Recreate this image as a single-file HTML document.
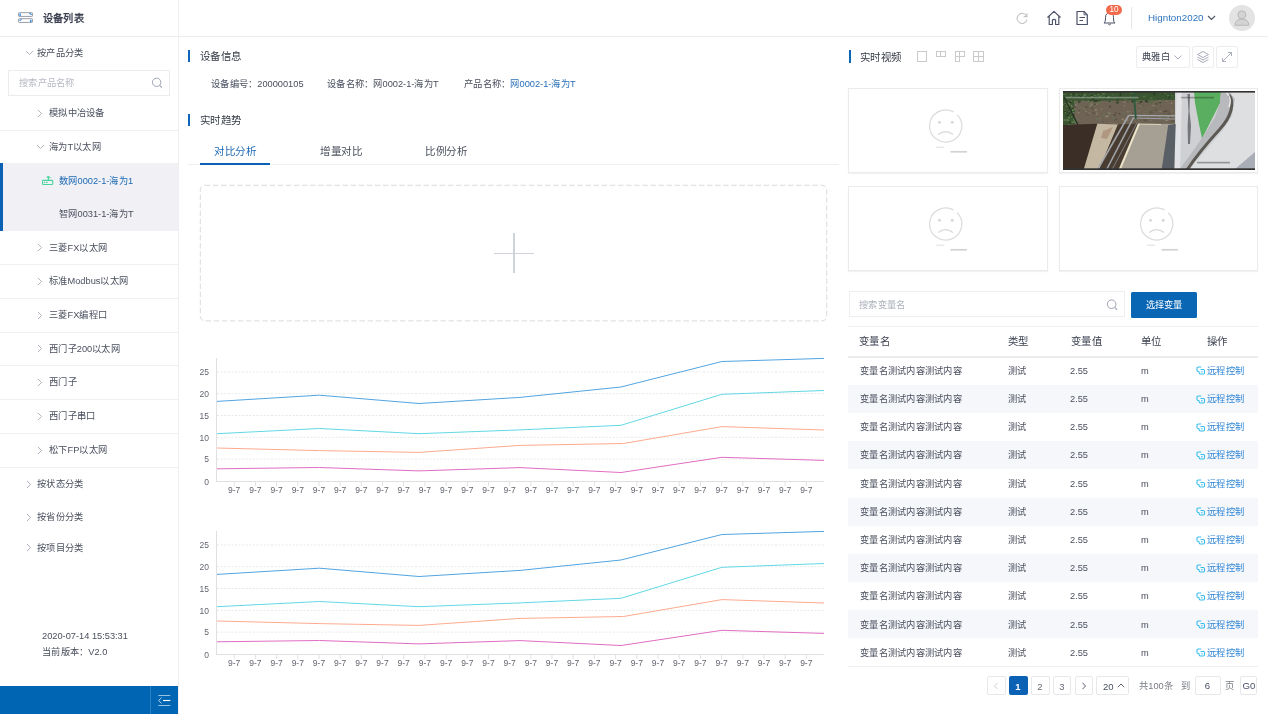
<!DOCTYPE html><html lang="zh-CN"><head><meta charset="utf-8"><style>
html,body{margin:0;padding:0;}
body{width:1268px;height:714px;overflow:hidden;position:relative;background:#fff;font-family:"Liberation Sans", sans-serif;}
.t{position:absolute;white-space:nowrap;will-change:transform;}
.b{position:absolute;box-sizing:border-box;}
</style></head><body>
<div class="b" style="left:0px;top:36px;width:1268px;height:1px;background:#ececec"></div>
<div class="b" style="left:178px;top:0px;width:1px;height:714px;background:#f0f0f0"></div>
<svg class="b" style="left:17px;top:11px;" width="17" height="13" viewBox="0 0 17 13">
<rect x="1.5" y="1.7" width="14" height="3.7" rx="0.6" fill="none" stroke="#9a9ca6" stroke-width="1"/>
<rect x="1.5" y="7.7" width="14" height="3.7" rx="0.6" fill="none" stroke="#9a9ca6" stroke-width="1"/>
<rect x="2.4" y="2.6" width="1.5" height="2.3" fill="#2f8ae6"/><path d="M12.5 2.3 L14.6 3.8" stroke="#2f8ae6" stroke-width="1.1"/>
<path d="M2.5 9.6 L4.6 8.4" stroke="#2f8ae6" stroke-width="1.1"/><rect x="13" y="8.8" width="1.5" height="2.3" fill="#2f8ae6"/>
</svg>
<div class="t" style="left:43.3px;top:11.96px;font-size:10.2px;line-height:14.28px;color:#3d4252;font-weight:bold;"><span style="letter-spacing:0.200px">设备列表</span></div>
<svg class="b" style="left:25px;top:49.5px;" width="9" height="6" viewBox="0 0 9 6"><path d="M1 1 L4.5 4.5 L8 1" fill="none" stroke="#a9adba" stroke-width="0.9"/></svg>
<div class="t" style="left:37px;top:47.12px;font-size:9.25px;line-height:12.95px;color:#4a4f5e;font-weight:normal;"><span style="letter-spacing:0.250px">按产品分类</span></div>
<div class="b" style="left:8px;top:70px;width:161.6px;height:26px;border:1px solid #ececef"></div>
<div class="t" style="left:19px;top:77.12px;font-size:9.25px;line-height:12.95px;color:#b7bac4;font-weight:normal;"><span style="letter-spacing:0.250px">搜索产品名称</span></div>
<svg class="b" style="left:150px;top:76px;" width="14" height="14" viewBox="0 0 14 14"><circle cx="6.6" cy="6.3" r="4.2" fill="none" stroke="#9ea3b2" stroke-width="1"/><path d="M9.7 9.4 L11.9 11.7" stroke="#9ea3b2" stroke-width="1.1"/></svg>
<svg class="b" style="left:37px;top:108.5px;" width="6" height="9" viewBox="0 0 6 9"><path d="M1 1 L4.5 4.5 L1 8" fill="none" stroke="#a9adba" stroke-width="0.9"/></svg>
<div class="t" style="left:48.5px;top:107.12px;font-size:9.25px;line-height:12.95px;color:#4a4f5e;font-weight:normal;"><span style="letter-spacing:0.250px">模拟中冶设备</span></div>
<div class="b" style="left:0px;top:129.5px;width:178px;height:1px;background:#f0f0f3"></div>
<svg class="b" style="left:36px;top:144px;" width="9" height="6" viewBox="0 0 9 6"><path d="M1 1 L4.5 4.5 L8 1" fill="none" stroke="#a9adba" stroke-width="0.9"/></svg>
<div class="t" style="left:48.5px;top:141.12px;font-size:9.25px;line-height:12.95px;color:#4a4f5e;font-weight:normal;"><span style="letter-spacing:0.250px">海为</span>T<span style="letter-spacing:0.250px">以太网</span></div>
<div class="b" style="left:0px;top:163px;width:178px;height:68px;background:#f0f0f5"></div>
<div class="b" style="left:0px;top:163px;width:3px;height:68px;background:#0b62b4"></div>
<svg class="b" style="left:41px;top:174px;" width="13" height="12" viewBox="0 0 13 12"><rect x="1.55" y="6.4" width="10.2" height="4.1" rx="0.8" fill="none" stroke="#48d49c" stroke-width="1.1"/><path d="M7.4 6.4 V3" stroke="#48d49c" stroke-width="1.1"/><path d="M5.8 3.6 Q6.6 2.5 7.6 2.7 Q8.6 2.9 9.4 4.1" fill="none" stroke="#48d49c" stroke-width="1.1"/><circle cx="3.5" cy="8.45" r="0.7" fill="#48d49c"/><ellipse cx="5.8" cy="8.45" rx="1" ry="0.65" fill="#48d49c"/></svg>
<div class="t" style="left:59px;top:174.62px;font-size:9.25px;line-height:12.95px;color:#1e6ab4;font-weight:normal;"><span style="letter-spacing:0.250px">数网</span>0002-1-<span style="letter-spacing:0.250px">海为</span>1</div>
<div class="t" style="left:59px;top:208.12px;font-size:9.25px;line-height:12.95px;color:#4a4f5e;font-weight:normal;"><span style="letter-spacing:0.250px">智网</span>0031-1-<span style="letter-spacing:0.250px">海为</span>T</div>
<svg class="b" style="left:37px;top:243.0px;" width="6" height="9" viewBox="0 0 6 9"><path d="M1 1 L4.5 4.5 L1 8" fill="none" stroke="#a9adba" stroke-width="0.9"/></svg>
<div class="t" style="left:48.5px;top:241.62px;font-size:9.25px;line-height:12.95px;color:#4a4f5e;font-weight:normal;"><span style="letter-spacing:0.250px">三菱</span>FX<span style="letter-spacing:0.250px">以太网</span></div>
<div class="b" style="left:0px;top:264.3px;width:178px;height:1px;background:#f0f0f3"></div>
<svg class="b" style="left:37px;top:276.5px;" width="6" height="9" viewBox="0 0 6 9"><path d="M1 1 L4.5 4.5 L1 8" fill="none" stroke="#a9adba" stroke-width="0.9"/></svg>
<div class="t" style="left:48.5px;top:275.12px;font-size:9.25px;line-height:12.95px;color:#4a4f5e;font-weight:normal;"><span style="letter-spacing:0.250px">标准</span>Modbus<span style="letter-spacing:0.250px">以太网</span></div>
<div class="b" style="left:0px;top:297.8px;width:178px;height:1px;background:#f0f0f3"></div>
<svg class="b" style="left:37px;top:310.5px;" width="6" height="9" viewBox="0 0 6 9"><path d="M1 1 L4.5 4.5 L1 8" fill="none" stroke="#a9adba" stroke-width="0.9"/></svg>
<div class="t" style="left:48.5px;top:309.12px;font-size:9.25px;line-height:12.95px;color:#4a4f5e;font-weight:normal;"><span style="letter-spacing:0.250px">三菱</span>FX<span style="letter-spacing:0.250px">编程口</span></div>
<div class="b" style="left:0px;top:331.8px;width:178px;height:1px;background:#f0f0f3"></div>
<svg class="b" style="left:37px;top:344.0px;" width="6" height="9" viewBox="0 0 6 9"><path d="M1 1 L4.5 4.5 L1 8" fill="none" stroke="#a9adba" stroke-width="0.9"/></svg>
<div class="t" style="left:48.5px;top:342.62px;font-size:9.25px;line-height:12.95px;color:#4a4f5e;font-weight:normal;"><span style="letter-spacing:0.250px">西门子</span>200<span style="letter-spacing:0.250px">以太网</span></div>
<div class="b" style="left:0px;top:365.3px;width:178px;height:1px;background:#f0f0f3"></div>
<svg class="b" style="left:37px;top:377.5px;" width="6" height="9" viewBox="0 0 6 9"><path d="M1 1 L4.5 4.5 L1 8" fill="none" stroke="#a9adba" stroke-width="0.9"/></svg>
<div class="t" style="left:48.5px;top:376.12px;font-size:9.25px;line-height:12.95px;color:#4a4f5e;font-weight:normal;"><span style="letter-spacing:0.250px">西门子</span></div>
<div class="b" style="left:0px;top:398.8px;width:178px;height:1px;background:#f0f0f3"></div>
<svg class="b" style="left:37px;top:411.5px;" width="6" height="9" viewBox="0 0 6 9"><path d="M1 1 L4.5 4.5 L1 8" fill="none" stroke="#a9adba" stroke-width="0.9"/></svg>
<div class="t" style="left:48.5px;top:410.12px;font-size:9.25px;line-height:12.95px;color:#4a4f5e;font-weight:normal;"><span style="letter-spacing:0.250px">西门子串口</span></div>
<div class="b" style="left:0px;top:432.8px;width:178px;height:1px;background:#f0f0f3"></div>
<svg class="b" style="left:37px;top:445.5px;" width="6" height="9" viewBox="0 0 6 9"><path d="M1 1 L4.5 4.5 L1 8" fill="none" stroke="#a9adba" stroke-width="0.9"/></svg>
<div class="t" style="left:48.5px;top:444.12px;font-size:9.25px;line-height:12.95px;color:#4a4f5e;font-weight:normal;"><span style="letter-spacing:0.250px">松下</span>FP<span style="letter-spacing:0.250px">以太网</span></div>
<div class="b" style="left:0px;top:466.8px;width:178px;height:1px;background:#f0f0f3"></div>
<svg class="b" style="left:25.5px;top:479.5px;" width="6" height="9" viewBox="0 0 6 9"><path d="M1 1 L4.5 4.5 L1 8" fill="none" stroke="#a9adba" stroke-width="0.9"/></svg>
<div class="t" style="left:37px;top:478.12px;font-size:9.25px;line-height:12.95px;color:#4a4f5e;font-weight:normal;"><span style="letter-spacing:0.250px">按状态分类</span></div>
<svg class="b" style="left:25.5px;top:512.8px;" width="6" height="9" viewBox="0 0 6 9"><path d="M1 1 L4.5 4.5 L1 8" fill="none" stroke="#a9adba" stroke-width="0.9"/></svg>
<div class="t" style="left:37px;top:511.42px;font-size:9.25px;line-height:12.95px;color:#4a4f5e;font-weight:normal;"><span style="letter-spacing:0.250px">按省份分类</span></div>
<svg class="b" style="left:25.5px;top:543.0px;" width="6" height="9" viewBox="0 0 6 9"><path d="M1 1 L4.5 4.5 L1 8" fill="none" stroke="#a9adba" stroke-width="0.9"/></svg>
<div class="t" style="left:37px;top:541.62px;font-size:9.25px;line-height:12.95px;color:#4a4f5e;font-weight:normal;"><span style="letter-spacing:0.250px">按项目分类</span></div>
<div class="t" style="left:41.5px;top:630.42px;font-size:9.25px;line-height:12.95px;color:#4a4f5e;font-weight:normal;">2020-07-14 15:53:31</div>
<div class="t" style="left:41.5px;top:646.33px;font-size:9.25px;line-height:12.95px;color:#4a4f5e;font-weight:normal;"><span style="letter-spacing:0.250px">当前版本：</span>V2.0</div>
<div class="b" style="left:0px;top:686px;width:178px;height:28px;background:#0066b3"></div>
<div class="b" style="left:150px;top:686px;width:1px;height:28px;background:#2a7fc0"></div>
<svg class="b" style="left:157px;top:693px;" width="15" height="15" viewBox="0 0 15 15"><path d="M1.3 2.5 H13.3 M1.3 12.5 H13.3" stroke="#fff" stroke-opacity="0.6" stroke-width="1"/><path d="M6 7.5 H13.3" stroke="#fff" stroke-width="1.1"/><path d="M4.6 4.6 L1.6 7.5 L4.6 10.4" fill="none" stroke="#fff" stroke-opacity="0.7" stroke-width="1"/></svg>
<svg class="b" style="left:1015px;top:11px;" width="14" height="14" viewBox="0 0 14 14"><path d="M11.6 5.2 A5 5 0 1 0 12 8.5" fill="none" stroke="#c4c4c4" stroke-width="1.1"/><path d="M12 2.2 V5.6 H8.6" fill="none" stroke="#c4c4c4" stroke-width="1.1"/></svg>
<svg class="b" style="left:1046px;top:10px;" width="16" height="16" viewBox="0 0 16 16"><path d="M1.5 7.5 L8 1.3 L14.5 7.5 M3.2 6 V14.5 H6.4 V10 Q8 8.6 9.6 10 V14.5 H12.8 V6" fill="none" stroke="#4b5066" stroke-width="1.15" stroke-linejoin="round"/></svg>
<svg class="b" style="left:1075px;top:10px;" width="15" height="16" viewBox="0 0 15 16"><path d="M2 1.5 H9 L12.3 4.8 V14.5 H2 Z" fill="none" stroke="#4b5066" stroke-width="1.2" stroke-linejoin="round"/><path d="M9 1.5 V4.8 H12.3" fill="none" stroke="#4b5066" stroke-width="0.9"/><path d="M4.5 7.5 H10 M4.5 10.5 H8" stroke="#4b5066" stroke-width="1.1"/></svg>
<svg class="b" style="left:1102px;top:11px;" width="15" height="15" viewBox="0 0 15 15"><path d="M2 12 Q3.5 11 3.5 8 V6.5 Q3.5 2 7.5 2 Q11.5 2 11.5 6.5 V8 Q11.5 11 13 12 Z" fill="none" stroke="#4b5066" stroke-width="1"/><path d="M6.2 13 Q7.5 14.6 8.8 13" fill="none" stroke="#4b5066" stroke-width="1"/></svg>
<div class="b" style="left:1106px;top:4.6px;width:16px;height:10px;background:#f26a4b;border-radius:5px"></div>
<div class="t" style="left:1106.00px;width:16px;text-align:center;top:4.46px;font-size:8.2px;line-height:11.48px;color:#fff;font-weight:normal;">10</div>
<div class="b" style="left:1131px;top:7px;width:1px;height:22px;background:#e6e6e6"></div>
<div class="t" style="left:1147.8px;top:10.64px;font-size:9.8px;line-height:13.72px;color:#2f74bd;font-weight:normal;">Hignton2020</div>
<svg class="b" style="left:1207px;top:15px;" width="9" height="6" viewBox="0 0 9 6"><path d="M1 1 L4.5 4.5 L8 1" fill="none" stroke="#4b5066" stroke-width="1.1"/></svg>
<div class="b" style="left:1228.7px;top:4.5px;width:26px;height:26px;background:#e3e3e3;border-radius:50%"></div>
<svg class="b" style="left:1231.7px;top:7.5px;" width="20" height="20" viewBox="0 0 20 20"><circle cx="9.9" cy="6.8" r="4" fill="#d3d3d3" stroke="#b9b9b9" stroke-width="1"/><path d="M3 17.3 Q3 11.2 9.9 11.2 Q16.8 11.2 16.8 17.3 Z" fill="#d3d3d3" stroke="#b9b9b9" stroke-width="1"/></svg>
<div class="b" style="left:188px;top:50.1px;width:2.1px;height:11.8px;background:#0b66b8"></div>
<div class="t" style="left:200px;top:50.19px;font-size:10.45px;line-height:14.63px;color:#353a46;font-weight:normal;"><span style="letter-spacing:0.450px">设备信息</span></div>
<div class="t" style="left:210.5px;top:77.92px;font-size:9.25px;line-height:12.95px;color:#4a4f5e;font-weight:normal;"><span style="letter-spacing:0.250px">设备编号：</span>200000105</div>
<div class="t" style="left:327.4px;top:77.92px;font-size:9.25px;line-height:12.95px;color:#4a4f5e;font-weight:normal;"><span style="letter-spacing:0.250px">设备名称：网</span>0002-1-<span style="letter-spacing:0.250px">海为</span>T</div>
<div class="t" style="left:464.2px;top:77.92px;font-size:9.25px;line-height:12.95px;color:#4a4f5e;font-weight:normal;"><span style="letter-spacing:0.250px">产品名称：</span><span style="color:#2a70b8"><span style="letter-spacing:0.250px">网</span>0002-1-<span style="letter-spacing:0.250px">海为</span>T</span></div>
<div class="b" style="left:188px;top:113.9px;width:2.1px;height:12.1px;background:#0b66b8"></div>
<div class="t" style="left:200px;top:114.19px;font-size:10.45px;line-height:14.63px;color:#353a46;font-weight:normal;"><span style="letter-spacing:0.450px">实时趋势</span></div>
<div class="t" style="left:214px;top:143.50px;font-size:10.57px;line-height:14.8px;color:#1e6ab4;font-weight:normal;"><span style="letter-spacing:-0.430px">对比分析</span></div>
<div class="t" style="left:319.8px;top:143.50px;font-size:10.57px;line-height:14.8px;color:#4a4f5e;font-weight:normal;"><span style="letter-spacing:-0.430px">增量对比</span></div>
<div class="t" style="left:425px;top:143.50px;font-size:10.57px;line-height:14.8px;color:#4a4f5e;font-weight:normal;"><span style="letter-spacing:-0.430px">比例分析</span></div>
<div class="b" style="left:188px;top:164.3px;width:651px;height:1px;background:#efefef"></div>
<div class="b" style="left:200px;top:162.8px;width:69.5px;height:2px;background:#0b62b4"></div>
<svg class="b" style="left:199px;top:184px;" width="629" height="138" viewBox="0 0 629 138"><rect x="1.3" y="1.3" width="626.4" height="135.6" rx="4.5" fill="none" stroke="#dadbe1" stroke-width="1" stroke-dasharray="5.5,2.6"/></svg>
<div class="b" style="left:494px;top:252.5px;width:40px;height:1.5px;background:#d0d3db"></div>
<div class="b" style="left:513.0px;top:233.3px;width:1.5px;height:40px;background:#d0d3db"></div>
<svg class="b" style="left:0px;top:340px;" width="840" height="170" viewBox="0 0 840 170"><line x1="217" y1="31.899999999999977" x2="824" y2="31.899999999999977" stroke="#e8e8e8" stroke-width="1" stroke-dasharray="2,1.6"/><line x1="217" y1="53.69999999999999" x2="824" y2="53.69999999999999" stroke="#e8e8e8" stroke-width="1" stroke-dasharray="2,1.6"/><line x1="217" y1="75.5" x2="824" y2="75.5" stroke="#e8e8e8" stroke-width="1" stroke-dasharray="2,1.6"/><line x1="217" y1="97.30000000000001" x2="824" y2="97.30000000000001" stroke="#e8e8e8" stroke-width="1" stroke-dasharray="2,1.6"/><line x1="217" y1="119.10000000000002" x2="824" y2="119.10000000000002" stroke="#e8e8e8" stroke-width="1" stroke-dasharray="2,1.6"/><line x1="216.5" y1="18" x2="216.5" y2="141.5" stroke="#e0e0e0" stroke-width="1"/><line x1="216" y1="141.5" x2="824" y2="141.5" stroke="#e0e0e0" stroke-width="1"/><line x1="234.2" y1="141.5" x2="234.2" y2="146" stroke="#e0e0e0" stroke-width="1"/><text x="234.2" y="153.3" text-anchor="middle" font-size="8.5" fill="#62666f" font-family="Liberation Sans">9-7</text><line x1="255.4" y1="141.5" x2="255.4" y2="146" stroke="#e0e0e0" stroke-width="1"/><text x="255.4" y="153.3" text-anchor="middle" font-size="8.5" fill="#62666f" font-family="Liberation Sans">9-7</text><line x1="276.6" y1="141.5" x2="276.6" y2="146" stroke="#e0e0e0" stroke-width="1"/><text x="276.6" y="153.3" text-anchor="middle" font-size="8.5" fill="#62666f" font-family="Liberation Sans">9-7</text><line x1="297.8" y1="141.5" x2="297.8" y2="146" stroke="#e0e0e0" stroke-width="1"/><text x="297.8" y="153.3" text-anchor="middle" font-size="8.5" fill="#62666f" font-family="Liberation Sans">9-7</text><line x1="319.0" y1="141.5" x2="319.0" y2="146" stroke="#e0e0e0" stroke-width="1"/><text x="319.0" y="153.3" text-anchor="middle" font-size="8.5" fill="#62666f" font-family="Liberation Sans">9-7</text><line x1="340.1" y1="141.5" x2="340.1" y2="146" stroke="#e0e0e0" stroke-width="1"/><text x="340.1" y="153.3" text-anchor="middle" font-size="8.5" fill="#62666f" font-family="Liberation Sans">9-7</text><line x1="361.3" y1="141.5" x2="361.3" y2="146" stroke="#e0e0e0" stroke-width="1"/><text x="361.3" y="153.3" text-anchor="middle" font-size="8.5" fill="#62666f" font-family="Liberation Sans">9-7</text><line x1="382.5" y1="141.5" x2="382.5" y2="146" stroke="#e0e0e0" stroke-width="1"/><text x="382.5" y="153.3" text-anchor="middle" font-size="8.5" fill="#62666f" font-family="Liberation Sans">9-7</text><line x1="403.7" y1="141.5" x2="403.7" y2="146" stroke="#e0e0e0" stroke-width="1"/><text x="403.7" y="153.3" text-anchor="middle" font-size="8.5" fill="#62666f" font-family="Liberation Sans">9-7</text><line x1="424.9" y1="141.5" x2="424.9" y2="146" stroke="#e0e0e0" stroke-width="1"/><text x="424.9" y="153.3" text-anchor="middle" font-size="8.5" fill="#62666f" font-family="Liberation Sans">9-7</text><line x1="446.1" y1="141.5" x2="446.1" y2="146" stroke="#e0e0e0" stroke-width="1"/><text x="446.1" y="153.3" text-anchor="middle" font-size="8.5" fill="#62666f" font-family="Liberation Sans">9-7</text><line x1="467.3" y1="141.5" x2="467.3" y2="146" stroke="#e0e0e0" stroke-width="1"/><text x="467.3" y="153.3" text-anchor="middle" font-size="8.5" fill="#62666f" font-family="Liberation Sans">9-7</text><line x1="488.5" y1="141.5" x2="488.5" y2="146" stroke="#e0e0e0" stroke-width="1"/><text x="488.5" y="153.3" text-anchor="middle" font-size="8.5" fill="#62666f" font-family="Liberation Sans">9-7</text><line x1="509.7" y1="141.5" x2="509.7" y2="146" stroke="#e0e0e0" stroke-width="1"/><text x="509.7" y="153.3" text-anchor="middle" font-size="8.5" fill="#62666f" font-family="Liberation Sans">9-7</text><line x1="530.9" y1="141.5" x2="530.9" y2="146" stroke="#e0e0e0" stroke-width="1"/><text x="530.9" y="153.3" text-anchor="middle" font-size="8.5" fill="#62666f" font-family="Liberation Sans">9-7</text><line x1="552.0" y1="141.5" x2="552.0" y2="146" stroke="#e0e0e0" stroke-width="1"/><text x="552.0" y="153.3" text-anchor="middle" font-size="8.5" fill="#62666f" font-family="Liberation Sans">9-7</text><line x1="573.2" y1="141.5" x2="573.2" y2="146" stroke="#e0e0e0" stroke-width="1"/><text x="573.2" y="153.3" text-anchor="middle" font-size="8.5" fill="#62666f" font-family="Liberation Sans">9-7</text><line x1="594.4" y1="141.5" x2="594.4" y2="146" stroke="#e0e0e0" stroke-width="1"/><text x="594.4" y="153.3" text-anchor="middle" font-size="8.5" fill="#62666f" font-family="Liberation Sans">9-7</text><line x1="615.6" y1="141.5" x2="615.6" y2="146" stroke="#e0e0e0" stroke-width="1"/><text x="615.6" y="153.3" text-anchor="middle" font-size="8.5" fill="#62666f" font-family="Liberation Sans">9-7</text><line x1="636.8" y1="141.5" x2="636.8" y2="146" stroke="#e0e0e0" stroke-width="1"/><text x="636.8" y="153.3" text-anchor="middle" font-size="8.5" fill="#62666f" font-family="Liberation Sans">9-7</text><line x1="658.0" y1="141.5" x2="658.0" y2="146" stroke="#e0e0e0" stroke-width="1"/><text x="658.0" y="153.3" text-anchor="middle" font-size="8.5" fill="#62666f" font-family="Liberation Sans">9-7</text><line x1="679.2" y1="141.5" x2="679.2" y2="146" stroke="#e0e0e0" stroke-width="1"/><text x="679.2" y="153.3" text-anchor="middle" font-size="8.5" fill="#62666f" font-family="Liberation Sans">9-7</text><line x1="700.4" y1="141.5" x2="700.4" y2="146" stroke="#e0e0e0" stroke-width="1"/><text x="700.4" y="153.3" text-anchor="middle" font-size="8.5" fill="#62666f" font-family="Liberation Sans">9-7</text><line x1="721.6" y1="141.5" x2="721.6" y2="146" stroke="#e0e0e0" stroke-width="1"/><text x="721.6" y="153.3" text-anchor="middle" font-size="8.5" fill="#62666f" font-family="Liberation Sans">9-7</text><line x1="742.8" y1="141.5" x2="742.8" y2="146" stroke="#e0e0e0" stroke-width="1"/><text x="742.8" y="153.3" text-anchor="middle" font-size="8.5" fill="#62666f" font-family="Liberation Sans">9-7</text><line x1="764.0" y1="141.5" x2="764.0" y2="146" stroke="#e0e0e0" stroke-width="1"/><text x="764.0" y="153.3" text-anchor="middle" font-size="8.5" fill="#62666f" font-family="Liberation Sans">9-7</text><line x1="785.1" y1="141.5" x2="785.1" y2="146" stroke="#e0e0e0" stroke-width="1"/><text x="785.1" y="153.3" text-anchor="middle" font-size="8.5" fill="#62666f" font-family="Liberation Sans">9-7</text><line x1="806.3" y1="141.5" x2="806.3" y2="146" stroke="#e0e0e0" stroke-width="1"/><text x="806.3" y="153.3" text-anchor="middle" font-size="8.5" fill="#62666f" font-family="Liberation Sans">9-7</text><text x="209" y="35.09999999999998" text-anchor="end" font-size="8.5" fill="#62666f" font-family="Liberation Sans">25</text><text x="209" y="56.89999999999999" text-anchor="end" font-size="8.5" fill="#62666f" font-family="Liberation Sans">20</text><text x="209" y="78.7" text-anchor="end" font-size="8.5" fill="#62666f" font-family="Liberation Sans">15</text><text x="209" y="100.50000000000001" text-anchor="end" font-size="8.5" fill="#62666f" font-family="Liberation Sans">10</text><text x="209" y="122.30000000000003" text-anchor="end" font-size="8.5" fill="#62666f" font-family="Liberation Sans">5</text><text x="209" y="144.7" text-anchor="end" font-size="8.5" fill="#62666f" font-family="Liberation Sans">0</text><polyline points="217,61.39999999999998 319.4,55.19999999999999 419,63.5 520,57.39999999999998 621,47 721.9,21.5 824,18.399999999999977" fill="none" stroke="#52a4e2" stroke-width="1"/><polyline points="217,93.69999999999999 319.4,88.5 419,93.69999999999999 520,89.89999999999998 621,85.30000000000001 721.9,54.30000000000001 824,50.5" fill="none" stroke="#62d8e4" stroke-width="1"/><polyline points="217,108 319.4,110.60000000000002 419,112.39999999999998 520,105.39999999999998 623.5,103.5 721.9,86.60000000000002 824,90" fill="none" stroke="#ffaa8e" stroke-width="1"/><polyline points="217,128.8 319.4,127.5 419,130.89999999999998 520,127.60000000000002 621,132.5 721.9,117.30000000000001 824,120.39999999999998" fill="none" stroke="#e26cc4" stroke-width="1"/></svg>
<svg class="b" style="left:0px;top:512.5px;" width="840" height="170" viewBox="0 0 840 170"><line x1="217" y1="31.899999999999977" x2="824" y2="31.899999999999977" stroke="#e8e8e8" stroke-width="1" stroke-dasharray="2,1.6"/><line x1="217" y1="53.69999999999999" x2="824" y2="53.69999999999999" stroke="#e8e8e8" stroke-width="1" stroke-dasharray="2,1.6"/><line x1="217" y1="75.5" x2="824" y2="75.5" stroke="#e8e8e8" stroke-width="1" stroke-dasharray="2,1.6"/><line x1="217" y1="97.30000000000001" x2="824" y2="97.30000000000001" stroke="#e8e8e8" stroke-width="1" stroke-dasharray="2,1.6"/><line x1="217" y1="119.10000000000002" x2="824" y2="119.10000000000002" stroke="#e8e8e8" stroke-width="1" stroke-dasharray="2,1.6"/><line x1="216.5" y1="18" x2="216.5" y2="141.5" stroke="#e0e0e0" stroke-width="1"/><line x1="216" y1="141.5" x2="824" y2="141.5" stroke="#e0e0e0" stroke-width="1"/><line x1="234.2" y1="141.5" x2="234.2" y2="146" stroke="#e0e0e0" stroke-width="1"/><text x="234.2" y="153.3" text-anchor="middle" font-size="8.5" fill="#62666f" font-family="Liberation Sans">9-7</text><line x1="255.4" y1="141.5" x2="255.4" y2="146" stroke="#e0e0e0" stroke-width="1"/><text x="255.4" y="153.3" text-anchor="middle" font-size="8.5" fill="#62666f" font-family="Liberation Sans">9-7</text><line x1="276.6" y1="141.5" x2="276.6" y2="146" stroke="#e0e0e0" stroke-width="1"/><text x="276.6" y="153.3" text-anchor="middle" font-size="8.5" fill="#62666f" font-family="Liberation Sans">9-7</text><line x1="297.8" y1="141.5" x2="297.8" y2="146" stroke="#e0e0e0" stroke-width="1"/><text x="297.8" y="153.3" text-anchor="middle" font-size="8.5" fill="#62666f" font-family="Liberation Sans">9-7</text><line x1="319.0" y1="141.5" x2="319.0" y2="146" stroke="#e0e0e0" stroke-width="1"/><text x="319.0" y="153.3" text-anchor="middle" font-size="8.5" fill="#62666f" font-family="Liberation Sans">9-7</text><line x1="340.1" y1="141.5" x2="340.1" y2="146" stroke="#e0e0e0" stroke-width="1"/><text x="340.1" y="153.3" text-anchor="middle" font-size="8.5" fill="#62666f" font-family="Liberation Sans">9-7</text><line x1="361.3" y1="141.5" x2="361.3" y2="146" stroke="#e0e0e0" stroke-width="1"/><text x="361.3" y="153.3" text-anchor="middle" font-size="8.5" fill="#62666f" font-family="Liberation Sans">9-7</text><line x1="382.5" y1="141.5" x2="382.5" y2="146" stroke="#e0e0e0" stroke-width="1"/><text x="382.5" y="153.3" text-anchor="middle" font-size="8.5" fill="#62666f" font-family="Liberation Sans">9-7</text><line x1="403.7" y1="141.5" x2="403.7" y2="146" stroke="#e0e0e0" stroke-width="1"/><text x="403.7" y="153.3" text-anchor="middle" font-size="8.5" fill="#62666f" font-family="Liberation Sans">9-7</text><line x1="424.9" y1="141.5" x2="424.9" y2="146" stroke="#e0e0e0" stroke-width="1"/><text x="424.9" y="153.3" text-anchor="middle" font-size="8.5" fill="#62666f" font-family="Liberation Sans">9-7</text><line x1="446.1" y1="141.5" x2="446.1" y2="146" stroke="#e0e0e0" stroke-width="1"/><text x="446.1" y="153.3" text-anchor="middle" font-size="8.5" fill="#62666f" font-family="Liberation Sans">9-7</text><line x1="467.3" y1="141.5" x2="467.3" y2="146" stroke="#e0e0e0" stroke-width="1"/><text x="467.3" y="153.3" text-anchor="middle" font-size="8.5" fill="#62666f" font-family="Liberation Sans">9-7</text><line x1="488.5" y1="141.5" x2="488.5" y2="146" stroke="#e0e0e0" stroke-width="1"/><text x="488.5" y="153.3" text-anchor="middle" font-size="8.5" fill="#62666f" font-family="Liberation Sans">9-7</text><line x1="509.7" y1="141.5" x2="509.7" y2="146" stroke="#e0e0e0" stroke-width="1"/><text x="509.7" y="153.3" text-anchor="middle" font-size="8.5" fill="#62666f" font-family="Liberation Sans">9-7</text><line x1="530.9" y1="141.5" x2="530.9" y2="146" stroke="#e0e0e0" stroke-width="1"/><text x="530.9" y="153.3" text-anchor="middle" font-size="8.5" fill="#62666f" font-family="Liberation Sans">9-7</text><line x1="552.0" y1="141.5" x2="552.0" y2="146" stroke="#e0e0e0" stroke-width="1"/><text x="552.0" y="153.3" text-anchor="middle" font-size="8.5" fill="#62666f" font-family="Liberation Sans">9-7</text><line x1="573.2" y1="141.5" x2="573.2" y2="146" stroke="#e0e0e0" stroke-width="1"/><text x="573.2" y="153.3" text-anchor="middle" font-size="8.5" fill="#62666f" font-family="Liberation Sans">9-7</text><line x1="594.4" y1="141.5" x2="594.4" y2="146" stroke="#e0e0e0" stroke-width="1"/><text x="594.4" y="153.3" text-anchor="middle" font-size="8.5" fill="#62666f" font-family="Liberation Sans">9-7</text><line x1="615.6" y1="141.5" x2="615.6" y2="146" stroke="#e0e0e0" stroke-width="1"/><text x="615.6" y="153.3" text-anchor="middle" font-size="8.5" fill="#62666f" font-family="Liberation Sans">9-7</text><line x1="636.8" y1="141.5" x2="636.8" y2="146" stroke="#e0e0e0" stroke-width="1"/><text x="636.8" y="153.3" text-anchor="middle" font-size="8.5" fill="#62666f" font-family="Liberation Sans">9-7</text><line x1="658.0" y1="141.5" x2="658.0" y2="146" stroke="#e0e0e0" stroke-width="1"/><text x="658.0" y="153.3" text-anchor="middle" font-size="8.5" fill="#62666f" font-family="Liberation Sans">9-7</text><line x1="679.2" y1="141.5" x2="679.2" y2="146" stroke="#e0e0e0" stroke-width="1"/><text x="679.2" y="153.3" text-anchor="middle" font-size="8.5" fill="#62666f" font-family="Liberation Sans">9-7</text><line x1="700.4" y1="141.5" x2="700.4" y2="146" stroke="#e0e0e0" stroke-width="1"/><text x="700.4" y="153.3" text-anchor="middle" font-size="8.5" fill="#62666f" font-family="Liberation Sans">9-7</text><line x1="721.6" y1="141.5" x2="721.6" y2="146" stroke="#e0e0e0" stroke-width="1"/><text x="721.6" y="153.3" text-anchor="middle" font-size="8.5" fill="#62666f" font-family="Liberation Sans">9-7</text><line x1="742.8" y1="141.5" x2="742.8" y2="146" stroke="#e0e0e0" stroke-width="1"/><text x="742.8" y="153.3" text-anchor="middle" font-size="8.5" fill="#62666f" font-family="Liberation Sans">9-7</text><line x1="764.0" y1="141.5" x2="764.0" y2="146" stroke="#e0e0e0" stroke-width="1"/><text x="764.0" y="153.3" text-anchor="middle" font-size="8.5" fill="#62666f" font-family="Liberation Sans">9-7</text><line x1="785.1" y1="141.5" x2="785.1" y2="146" stroke="#e0e0e0" stroke-width="1"/><text x="785.1" y="153.3" text-anchor="middle" font-size="8.5" fill="#62666f" font-family="Liberation Sans">9-7</text><line x1="806.3" y1="141.5" x2="806.3" y2="146" stroke="#e0e0e0" stroke-width="1"/><text x="806.3" y="153.3" text-anchor="middle" font-size="8.5" fill="#62666f" font-family="Liberation Sans">9-7</text><text x="209" y="35.09999999999998" text-anchor="end" font-size="8.5" fill="#62666f" font-family="Liberation Sans">25</text><text x="209" y="56.89999999999999" text-anchor="end" font-size="8.5" fill="#62666f" font-family="Liberation Sans">20</text><text x="209" y="78.7" text-anchor="end" font-size="8.5" fill="#62666f" font-family="Liberation Sans">15</text><text x="209" y="100.50000000000001" text-anchor="end" font-size="8.5" fill="#62666f" font-family="Liberation Sans">10</text><text x="209" y="122.30000000000003" text-anchor="end" font-size="8.5" fill="#62666f" font-family="Liberation Sans">5</text><text x="209" y="144.7" text-anchor="end" font-size="8.5" fill="#62666f" font-family="Liberation Sans">0</text><polyline points="217,61.39999999999998 319.4,55.19999999999999 419,63.5 520,57.39999999999998 621,47 721.9,21.5 824,18.399999999999977" fill="none" stroke="#52a4e2" stroke-width="1"/><polyline points="217,93.69999999999999 319.4,88.5 419,93.69999999999999 520,89.89999999999998 621,85.30000000000001 721.9,54.30000000000001 824,50.5" fill="none" stroke="#62d8e4" stroke-width="1"/><polyline points="217,108 319.4,110.60000000000002 419,112.39999999999998 520,105.39999999999998 623.5,103.5 721.9,86.60000000000002 824,90" fill="none" stroke="#ffaa8e" stroke-width="1"/><polyline points="217,128.8 319.4,127.5 419,130.89999999999998 520,127.60000000000002 621,132.5 721.9,117.30000000000001 824,120.39999999999998" fill="none" stroke="#e26cc4" stroke-width="1"/></svg>
<div class="b" style="left:848.6px;top:50.1px;width:2.2px;height:12.7px;background:#0b66b8"></div>
<div class="t" style="left:860.2px;top:50.59px;font-size:10.45px;line-height:14.63px;color:#353a46;font-weight:normal;"><span style="letter-spacing:0.450px">实时视频</span></div>
<svg class="b" style="left:910px;top:44px;" width="80" height="26" viewBox="0 0 80 26"><g fill="none" stroke="#cacaca" stroke-width="1" shape-rendering="crispEdges"><rect x="7.5" y="7.5" width="9" height="10"/><rect x="26.5" y="7.5" width="9" height="5"/><path d="M30.5 7.5 V12.5"/><path d="M45.5 7.5 H54.5 V12.5 H45.5 Z M49.5 7.5 V17.5 M45.5 12.5 V17.5 H49.5"/><rect x="63.5" y="7.5" width="9.5" height="10"/><path d="M68.5 7.5 V17.5 M63.5 12.5 H73"/></g></svg>
<div class="b" style="left:1135.6px;top:45.7px;width:54px;height:22px;border:1px solid #ededf0;border-radius:2px"></div>
<div class="t" style="left:1142px;top:50.83px;font-size:9.25px;line-height:12.95px;color:#3d4252;font-weight:normal;"><span style="letter-spacing:0.250px">典雅白</span></div>
<svg class="b" style="left:1174px;top:54.5px;" width="8" height="5" viewBox="0 0 8 5"><path d="M0.5 0.5 L4 4 L7.5 0.5" fill="none" stroke="#9ea3b2" stroke-width="0.9"/></svg>
<div class="b" style="left:1191.7px;top:45.7px;width:22px;height:22px;border:1px solid #ededf0;border-radius:2px"></div>
<svg class="b" style="left:1195.7px;top:49.7px;" width="14" height="14" viewBox="0 0 14 14"><path d="M7 1.5 L12.5 4.5 L7 7.5 L1.5 4.5 Z" fill="none" stroke="#9ea3b2" stroke-width="0.9"/><path d="M1.5 7 L7 10 L12.5 7 M1.5 9.5 L7 12.5 L12.5 9.5" fill="none" stroke="#9ea3b2" stroke-width="0.9"/></svg>
<div class="b" style="left:1216.3px;top:45.7px;width:22px;height:22px;border:1px solid #ededf0;border-radius:2px"></div>
<svg class="b" style="left:1220.3px;top:49.7px;" width="14" height="14" viewBox="0 0 14 14"><path d="M2.5 11.5 L11.5 2.5 M8 2.5 H11.5 V6 M2.5 8 V11.5 H6" fill="none" stroke="#a3a8b6" stroke-width="0.9"/></svg>
<div class="b" style="left:848.4px;top:88.3px;width:199.4px;height:85px;border:1px solid #ebebeb;box-shadow:0 1px 1px rgba(0,0,0,0.05)"></div>
<svg class="b" style="left:927.8px;top:108.3px;" width="40" height="50" viewBox="0 0 40 50"><path d="M29.08 6.62 A16.1 16.1 0 1 1 25.5 3.92" fill="none" stroke="#dcdcdc" stroke-width="1.25"/><circle cx="11.5" cy="14.2" r="1.5" fill="#d8d8d8"/><circle cx="24.2" cy="14.2" r="1.5" fill="#d8d8d8"/><path d="M10.2 26.4 Q17.6 21 25 26.4" fill="none" stroke="#d8d8d8" stroke-width="1.2"/><path d="M8.2 39.2 H16.2" stroke="#dedede" stroke-width="1"/><path d="M22.5 43.8 H38.9" stroke="#d2d2d2" stroke-width="1.7"/></svg>
<div class="b" style="left:848.4px;top:186.2px;width:199.4px;height:85px;border:1px solid #ebebeb;box-shadow:0 1px 1px rgba(0,0,0,0.05)"></div>
<svg class="b" style="left:927.8px;top:206.2px;" width="40" height="50" viewBox="0 0 40 50"><path d="M29.08 6.62 A16.1 16.1 0 1 1 25.5 3.92" fill="none" stroke="#dcdcdc" stroke-width="1.25"/><circle cx="11.5" cy="14.2" r="1.5" fill="#d8d8d8"/><circle cx="24.2" cy="14.2" r="1.5" fill="#d8d8d8"/><path d="M10.2 26.4 Q17.6 21 25 26.4" fill="none" stroke="#d8d8d8" stroke-width="1.2"/><path d="M8.2 39.2 H16.2" stroke="#dedede" stroke-width="1"/><path d="M22.5 43.8 H38.9" stroke="#d2d2d2" stroke-width="1.7"/></svg>
<div class="b" style="left:1059.2px;top:186.2px;width:198.4px;height:85px;border:1px solid #ebebeb;box-shadow:0 1px 1px rgba(0,0,0,0.05)"></div>
<svg class="b" style="left:1138.6px;top:206.2px;" width="40" height="50" viewBox="0 0 40 50"><path d="M29.08 6.62 A16.1 16.1 0 1 1 25.5 3.92" fill="none" stroke="#dcdcdc" stroke-width="1.25"/><circle cx="11.5" cy="14.2" r="1.5" fill="#d8d8d8"/><circle cx="24.2" cy="14.2" r="1.5" fill="#d8d8d8"/><path d="M10.2 26.4 Q17.6 21 25 26.4" fill="none" stroke="#d8d8d8" stroke-width="1.2"/><path d="M8.2 39.2 H16.2" stroke="#dedede" stroke-width="1"/><path d="M22.5 43.8 H38.9" stroke="#d2d2d2" stroke-width="1.7"/></svg>
<div class="b" style="left:1059.4px;top:88.3px;width:198.2px;height:85px;border:1px solid #ebebeb;box-shadow:0 1px 1px rgba(0,0,0,0.05)"></div>
<svg class="b" style="left:1062.9px;top:91.2px;" width="192" height="79" viewBox="0 0 192 79">
<defs><filter id="bl" x="-5%" y="-5%" width="110%" height="110%"><feGaussianBlur stdDeviation="0.75"/></filter>
<pattern id="soil" width="6" height="5" patternUnits="userSpaceOnUse"><rect width="6" height="5" fill="#6b6050"/><rect x="1" y="1" width="2" height="1" fill="#857a68"/><rect x="4" y="3" width="1.5" height="1" fill="#4e4438"/></pattern>
<pattern id="leaf" width="5" height="4" patternUnits="userSpaceOnUse"><rect width="5" height="4" fill="#36502e"/><rect x="1" y="1" width="2" height="1.2" fill="#4f7040"/></pattern>
</defs>
<g filter="url(#bl)">
<rect x="0" y="0" width="192" height="79" fill="#3b3128"/>
<polygon points="0,0 112,0 112,10 0,12" fill="#3a5432"/>
<polygon points="0,10 112,9 112,33 75,32.5 54,34 34,33 0,36" fill="#6e6454"/>
<polygon points="0,0 10,0 12,20 9,45 0,50" fill="#3a5530"/>
<rect x="35.6" y="12.6" width="1.1" height="1.8" fill="#6a7058" opacity="0.8"/><rect x="10.4" y="23.0" width="1.5" height="0.9" fill="#4e463c" opacity="0.8"/><rect x="46.0" y="14.8" width="2.1" height="1.8" fill="#4e463c" opacity="0.8"/><rect x="13.6" y="14.4" width="2.5" height="0.9" fill="#6a7058" opacity="0.8"/><rect x="64.4" y="10.2" width="1.1" height="1.8" fill="#5a5044" opacity="0.8"/><rect x="31.9" y="12.5" width="2.4" height="1.5" fill="#8a7e6c" opacity="0.8"/><rect x="75.0" y="11.5" width="2.6" height="1.2" fill="#4e463c" opacity="0.8"/><rect x="60.3" y="10.5" width="2.5" height="1.4" fill="#8a7e6c" opacity="0.8"/><rect x="58.5" y="27.7" width="2.5" height="1.3" fill="#958a78" opacity="0.8"/><rect x="33.0" y="28.1" width="2.9" height="0.9" fill="#6a7058" opacity="0.8"/><rect x="33.0" y="20.9" width="2.8" height="1.1" fill="#7c7262" opacity="0.8"/><rect x="107.8" y="11.8" width="1.4" height="1.2" fill="#958a78" opacity="0.8"/><rect x="102.7" y="19.1" width="1.2" height="1.5" fill="#6a7058" opacity="0.8"/><rect x="86.8" y="28.6" width="2.7" height="1.5" fill="#7c7262" opacity="0.8"/><rect x="63.8" y="19.9" width="3.4" height="1.4" fill="#8a7e6c" opacity="0.8"/><rect x="73.1" y="10.5" width="1.8" height="1.5" fill="#6a7058" opacity="0.8"/><rect x="74.9" y="19.7" width="2.0" height="1.6" fill="#6a7058" opacity="0.8"/><rect x="2.5" y="20.1" width="2.5" height="1.4" fill="#5a5044" opacity="0.8"/><rect x="24.0" y="15.9" width="1.6" height="1.3" fill="#6a7058" opacity="0.8"/><rect x="95.9" y="10.9" width="2.0" height="1.1" fill="#958a78" opacity="0.8"/><rect x="15.1" y="19.3" width="1.7" height="1.3" fill="#4e463c" opacity="0.8"/><rect x="39.5" y="30.2" width="1.4" height="1.0" fill="#5a5044" opacity="0.8"/><rect x="25.5" y="14.6" width="3.1" height="1.0" fill="#958a78" opacity="0.8"/><rect x="31.0" y="12.5" width="1.9" height="1.5" fill="#4e463c" opacity="0.8"/><rect x="104.8" y="25.6" width="3.4" height="1.6" fill="#4e463c" opacity="0.8"/><rect x="81.4" y="20.0" width="3.0" height="1.3" fill="#6a7058" opacity="0.8"/><rect x="43.9" y="11.5" width="2.0" height="1.0" fill="#6a7058" opacity="0.8"/><rect x="108.3" y="19.6" width="1.9" height="0.9" fill="#8a7e6c" opacity="0.8"/><rect x="0.0" y="12.6" width="3.4" height="1.5" fill="#8a7e6c" opacity="0.8"/><rect x="7.7" y="14.0" width="1.4" height="1.1" fill="#958a78" opacity="0.8"/><rect x="38.2" y="17.7" width="1.3" height="1.4" fill="#8a7e6c" opacity="0.8"/><rect x="107.6" y="20.5" width="1.2" height="0.9" fill="#7c7262" opacity="0.8"/><rect x="37.7" y="15.4" width="1.4" height="0.8" fill="#6a7058" opacity="0.8"/><rect x="104.6" y="21.7" width="2.7" height="1.9" fill="#5a5044" opacity="0.8"/><rect x="83.4" y="16.2" width="3.2" height="1.6" fill="#6a7058" opacity="0.8"/><rect x="28.7" y="17.8" width="1.9" height="1.1" fill="#5a5044" opacity="0.8"/><rect x="59.6" y="21.1" width="1.6" height="1.8" fill="#6a7058" opacity="0.8"/><rect x="108.3" y="29.5" width="3.0" height="1.7" fill="#5a5044" opacity="0.8"/><rect x="24.9" y="21.4" width="2.8" height="2.0" fill="#7c7262" opacity="0.8"/><rect x="86.9" y="20.3" width="2.7" height="1.9" fill="#5a5044" opacity="0.8"/><rect x="49.2" y="31.5" width="3.4" height="1.2" fill="#7c7262" opacity="0.8"/><rect x="24.3" y="14.4" width="1.8" height="1.4" fill="#5a5044" opacity="0.8"/><rect x="108.4" y="23.6" width="2.2" height="1.6" fill="#8a7e6c" opacity="0.8"/><rect x="88.0" y="11.0" width="1.3" height="1.3" fill="#6a7058" opacity="0.8"/><rect x="78.3" y="13.8" width="2.1" height="1.6" fill="#5a5044" opacity="0.8"/><rect x="9.5" y="31.7" width="2.0" height="1.3" fill="#6a7058" opacity="0.8"/><rect x="104.1" y="26.4" width="3.5" height="0.8" fill="#5a5044" opacity="0.8"/><rect x="65.0" y="20.2" width="1.4" height="1.8" fill="#6a7058" opacity="0.8"/><rect x="107.8" y="24.8" width="1.4" height="1.5" fill="#7c7262" opacity="0.8"/><rect x="2.4" y="28.2" width="2.6" height="1.4" fill="#6a7058" opacity="0.8"/><rect x="102.7" y="19.4" width="3.1" height="1.1" fill="#5a5044" opacity="0.8"/><rect x="27.7" y="16.0" width="2.9" height="1.2" fill="#5a5044" opacity="0.8"/><rect x="59.9" y="29.0" width="3.3" height="1.2" fill="#8a7e6c" opacity="0.8"/><rect x="50.4" y="23.0" width="2.1" height="1.9" fill="#4e463c" opacity="0.8"/><rect x="55.2" y="21.8" width="2.3" height="1.8" fill="#4e463c" opacity="0.8"/><rect x="85.4" y="23.6" width="1.4" height="1.4" fill="#5a5044" opacity="0.8"/><rect x="79.8" y="22.4" width="2.7" height="1.4" fill="#7c7262" opacity="0.8"/><rect x="53.1" y="27.6" width="1.1" height="1.0" fill="#4e463c" opacity="0.8"/><rect x="4.6" y="11.3" width="2.4" height="1.7" fill="#958a78" opacity="0.8"/><rect x="100.4" y="19.6" width="3.4" height="1.5" fill="#4e463c" opacity="0.8"/><rect x="21.9" y="15.7" width="2.3" height="1.4" fill="#4e463c" opacity="0.8"/><rect x="103.6" y="25.8" width="3.3" height="1.9" fill="#7c7262" opacity="0.8"/><rect x="22.3" y="19.7" width="1.3" height="1.3" fill="#958a78" opacity="0.8"/><rect x="8.0" y="14.8" width="1.5" height="1.2" fill="#8a7e6c" opacity="0.8"/><rect x="13.5" y="27.6" width="2.6" height="1.2" fill="#6a7058" opacity="0.8"/><rect x="27.8" y="12.3" width="1.5" height="1.9" fill="#958a78" opacity="0.8"/><rect x="43.8" y="20.7" width="3.1" height="1.0" fill="#6a7058" opacity="0.8"/><rect x="47.5" y="21.4" width="2.1" height="1.2" fill="#7c7262" opacity="0.8"/><rect x="10.1" y="17.8" width="2.4" height="1.3" fill="#7c7262" opacity="0.8"/><rect x="2.0" y="17.0" width="1.7" height="2.0" fill="#4e463c" opacity="0.8"/><rect x="12.4" y="31.0" width="3.4" height="0.9" fill="#5a5044" opacity="0.8"/><rect x="29.2" y="10.0" width="1.7" height="1.0" fill="#5a5044" opacity="0.8"/><rect x="46.4" y="30.9" width="2.0" height="1.4" fill="#7c7262" opacity="0.8"/><rect x="56.6" y="20.9" width="1.2" height="0.9" fill="#7c7262" opacity="0.8"/><rect x="75.7" y="19.2" width="1.7" height="0.8" fill="#8a7e6c" opacity="0.8"/><rect x="9.7" y="15.3" width="3.1" height="0.9" fill="#4e463c" opacity="0.8"/><rect x="94.9" y="19.9" width="3.5" height="1.3" fill="#7c7262" opacity="0.8"/><rect x="100.7" y="23.9" width="2.3" height="1.1" fill="#8a7e6c" opacity="0.8"/><rect x="12.0" y="12.9" width="1.5" height="1.9" fill="#8a7e6c" opacity="0.8"/><rect x="69.2" y="21.7" width="1.7" height="1.4" fill="#5a5044" opacity="0.8"/><rect x="19.6" y="17.3" width="3.5" height="0.8" fill="#8a7e6c" opacity="0.8"/><rect x="2.0" y="21.1" width="2.3" height="1.1" fill="#5a5044" opacity="0.8"/><rect x="49.2" y="24.8" width="2.1" height="1.4" fill="#6a7058" opacity="0.8"/><rect x="91.8" y="18.4" width="1.8" height="1.1" fill="#4e463c" opacity="0.8"/><rect x="25.3" y="13.8" width="2.8" height="1.0" fill="#6a7058" opacity="0.8"/><rect x="108.8" y="32.6" width="1.0" height="1.6" fill="#5a5044" opacity="0.8"/><rect x="96.8" y="19.3" width="1.2" height="1.8" fill="#8a7e6c" opacity="0.8"/><rect x="95.8" y="25.1" width="2.5" height="1.6" fill="#7c7262" opacity="0.8"/><rect x="5.0" y="13.4" width="2.1" height="1.1" fill="#7c7262" opacity="0.8"/><rect x="105.8" y="32.3" width="1.8" height="0.8" fill="#4e463c" opacity="0.8"/><rect x="97.1" y="14.2" width="1.0" height="1.3" fill="#5a5044" opacity="0.8"/><rect x="52.2" y="21.1" width="1.6" height="1.7" fill="#5a5044" opacity="0.8"/><rect x="10.0" y="28.6" width="2.0" height="0.9" fill="#5a5044" opacity="0.8"/><rect x="2.5" y="16.3" width="1.2" height="1.9" fill="#5a5044" opacity="0.8"/><rect x="93.9" y="12.7" width="3.0" height="1.5" fill="#6a7058" opacity="0.8"/><rect x="84.1" y="26.3" width="1.4" height="1.7" fill="#958a78" opacity="0.8"/><rect x="70.8" y="10.1" width="3.2" height="1.6" fill="#6a7058" opacity="0.8"/><rect x="80.7" y="28.5" width="3.3" height="1.7" fill="#5a5044" opacity="0.8"/><rect x="62.5" y="28.5" width="3.1" height="1.5" fill="#8a7e6c" opacity="0.8"/><rect x="98.2" y="25.4" width="2.6" height="0.9" fill="#6a7058" opacity="0.8"/><rect x="4.6" y="24.3" width="1.9" height="1.3" fill="#8a7e6c" opacity="0.8"/><rect x="5.6" y="9.5" width="2.7" height="1.4" fill="#4e463c" opacity="0.8"/><rect x="0.4" y="28.1" width="3.3" height="1.9" fill="#6a7058" opacity="0.8"/><rect x="10.1" y="21.6" width="2.8" height="1.1" fill="#6a7058" opacity="0.8"/><rect x="8.2" y="15.4" width="2.9" height="1.1" fill="#6a7058" opacity="0.8"/><rect x="71.5" y="20.0" width="1.2" height="1.9" fill="#958a78" opacity="0.8"/><rect x="31.6" y="10.1" width="2.6" height="0.9" fill="#6a7058" opacity="0.8"/><rect x="16.2" y="15.1" width="2.7" height="1.5" fill="#6a7058" opacity="0.8"/><rect x="14.7" y="20.6" width="1.7" height="1.6" fill="#958a78" opacity="0.8"/><rect x="76.1" y="25.2" width="2.8" height="1.1" fill="#7c7262" opacity="0.8"/><rect x="51.2" y="27.4" width="1.5" height="2.0" fill="#4e463c" opacity="0.8"/><rect x="103.0" y="9.4" width="1.2" height="1.4" fill="#958a78" opacity="0.8"/><rect x="109.4" y="32.9" width="1.5" height="1.9" fill="#958a78" opacity="0.8"/><rect x="23.2" y="23.0" width="2.9" height="1.1" fill="#5a5044" opacity="0.8"/><rect x="39.6" y="23.5" width="2.3" height="1.9" fill="#6a7058" opacity="0.8"/><rect x="77.4" y="14.6" width="2.0" height="1.0" fill="#958a78" opacity="0.8"/><rect x="104.5" y="25.4" width="1.8" height="1.0" fill="#958a78" opacity="0.8"/><rect x="37.8" y="16.6" width="1.0" height="1.7" fill="#7c7262" opacity="0.8"/><rect x="92.3" y="11.9" width="2.8" height="1.9" fill="#5a5044" opacity="0.8"/><rect x="31.9" y="17.9" width="2.0" height="1.8" fill="#958a78" opacity="0.8"/><rect x="8.4" y="31.2" width="3.1" height="1.1" fill="#7c7262" opacity="0.8"/><rect x="5.7" y="24.9" width="3.3" height="1.1" fill="#6a7058" opacity="0.8"/><rect x="29.2" y="21.3" width="2.9" height="1.7" fill="#5a5044" opacity="0.8"/><rect x="47.1" y="9.7" width="2.0" height="1.9" fill="#6a7058" opacity="0.8"/><rect x="61.0" y="13.9" width="1.1" height="1.7" fill="#8a7e6c" opacity="0.8"/><rect x="49.6" y="27.1" width="3.2" height="1.4" fill="#6a7058" opacity="0.8"/><rect x="100.3" y="22.2" width="2.2" height="1.2" fill="#5a5044" opacity="0.8"/><rect x="32.8" y="26.7" width="1.7" height="1.6" fill="#6a7058" opacity="0.8"/><rect x="33.1" y="22.4" width="1.3" height="1.6" fill="#958a78" opacity="0.8"/><rect x="8.3" y="21.0" width="2.4" height="1.3" fill="#958a78" opacity="0.8"/><rect x="36.6" y="27.2" width="1.3" height="1.0" fill="#958a78" opacity="0.8"/><rect x="10.0" y="17.2" width="1.8" height="1.2" fill="#8a7e6c" opacity="0.8"/><rect x="89.0" y="13.9" width="2.9" height="1.3" fill="#8a7e6c" opacity="0.8"/><rect x="45.5" y="21.6" width="1.7" height="1.7" fill="#958a78" opacity="0.8"/><rect x="54.8" y="22.8" width="1.3" height="1.4" fill="#7c7262" opacity="0.8"/><rect x="69.3" y="29.7" width="1.2" height="1.9" fill="#5a5044" opacity="0.8"/><rect x="42.3" y="24.5" width="3.4" height="1.8" fill="#958a78" opacity="0.8"/><rect x="96.0" y="9.5" width="2.1" height="1.7" fill="#8a7e6c" opacity="0.8"/><rect x="88.5" y="32.2" width="1.0" height="1.3" fill="#958a78" opacity="0.8"/><rect x="102.0" y="28.8" width="3.4" height="1.1" fill="#958a78" opacity="0.8"/><rect x="12.2" y="3.0" width="2.9" height="1.7" fill="#4c6e3e"/><rect x="72.5" y="8.8" width="1.2" height="1.7" fill="#33482c"/><rect x="0.2" y="2.7" width="2.3" height="1.2" fill="#4c6e3e"/><rect x="14.3" y="3.9" width="2.4" height="0.9" fill="#33482c"/><rect x="7.9" y="6.5" width="1.8" height="1.1" fill="#2a3c24"/><rect x="67.3" y="1.6" width="3.0" height="1.1" fill="#5a7c48"/><rect x="35.4" y="9.5" width="2.0" height="1.1" fill="#2a3c24"/><rect x="27.7" y="10.6" width="1.1" height="1.0" fill="#5a7c48"/><rect x="99.1" y="7.6" width="1.5" height="1.6" fill="#4c6e3e"/><rect x="103.6" y="3.7" width="2.4" height="1.7" fill="#4c6e3e"/><rect x="40.6" y="5.3" width="2.6" height="1.7" fill="#4c6e3e"/><rect x="56.5" y="3.4" width="1.6" height="1.8" fill="#2a3c24"/><rect x="25.9" y="3.6" width="1.2" height="1.5" fill="#5a7c48"/><rect x="68.3" y="10.0" width="1.8" height="1.6" fill="#33482c"/><rect x="106.3" y="2.9" width="1.1" height="0.8" fill="#33482c"/><rect x="66.8" y="5.4" width="1.4" height="1.3" fill="#4c6e3e"/><rect x="79.7" y="4.5" width="3.0" height="1.9" fill="#4c6e3e"/><rect x="36.9" y="3.3" width="1.1" height="1.6" fill="#33482c"/><rect x="42.4" y="5.1" width="1.9" height="0.9" fill="#5a7c48"/><rect x="8.8" y="2.3" width="2.9" height="0.9" fill="#33482c"/><rect x="108.0" y="3.5" width="2.5" height="1.2" fill="#5a7c48"/><rect x="90.0" y="2.3" width="1.4" height="1.4" fill="#33482c"/><rect x="50.0" y="4.6" width="1.1" height="1.3" fill="#33482c"/><rect x="90.9" y="8.8" width="1.8" height="1.4" fill="#4c6e3e"/><rect x="90.0" y="2.1" width="2.5" height="1.9" fill="#2a3c24"/><rect x="38.0" y="4.1" width="1.5" height="1.7" fill="#4c6e3e"/><rect x="35.4" y="4.1" width="2.4" height="1.5" fill="#4c6e3e"/><rect x="90.2" y="10.5" width="1.0" height="1.1" fill="#4c6e3e"/><rect x="53.2" y="10.6" width="2.6" height="1.9" fill="#33482c"/><rect x="91.3" y="2.8" width="1.4" height="1.8" fill="#33482c"/><rect x="82.7" y="9.3" width="2.2" height="1.2" fill="#2a3c24"/><rect x="35.8" y="4.9" width="2.0" height="1.3" fill="#4c6e3e"/><rect x="17.9" y="5.4" width="2.0" height="1.5" fill="#4c6e3e"/><rect x="18.0" y="5.6" width="3.0" height="1.1" fill="#4c6e3e"/><rect x="9.4" y="2.4" width="3.0" height="2.0" fill="#33482c"/><rect x="19.4" y="2.8" width="2.2" height="1.6" fill="#33482c"/><rect x="83.8" y="9.5" width="2.6" height="1.2" fill="#4c6e3e"/><rect x="31.3" y="4.0" width="2.5" height="1.0" fill="#5a7c48"/><rect x="27.7" y="3.8" width="1.6" height="1.9" fill="#2a3c24"/><rect x="21.1" y="2.1" width="3.0" height="1.4" fill="#5a7c48"/><rect x="25.9" y="9.2" width="3.0" height="0.9" fill="#33482c"/><rect x="53.2" y="9.3" width="2.8" height="0.8" fill="#33482c"/><rect x="32.9" y="2.6" width="2.2" height="1.8" fill="#2a3c24"/><rect x="21.7" y="2.2" width="1.9" height="1.1" fill="#2a3c24"/><rect x="87.1" y="10.5" width="2.3" height="1.7" fill="#4c6e3e"/><rect x="39.2" y="1.9" width="1.3" height="1.0" fill="#5a7c48"/><rect x="28.6" y="7.2" width="2.6" height="1.8" fill="#2a3c24"/><rect x="45.8" y="5.0" width="1.2" height="0.8" fill="#5a7c48"/><rect x="55.5" y="6.1" width="1.2" height="1.3" fill="#33482c"/><rect x="61.6" y="7.6" width="2.3" height="1.3" fill="#4c6e3e"/><rect x="30.4" y="10.9" width="1.8" height="0.9" fill="#5a7c48"/><rect x="83.5" y="9.9" width="1.8" height="1.8" fill="#33482c"/><rect x="111.6" y="5.0" width="1.8" height="1.3" fill="#2a3c24"/><rect x="105.5" y="5.6" width="1.8" height="1.8" fill="#2a3c24"/><rect x="45.5" y="9.9" width="2.5" height="1.0" fill="#33482c"/><rect x="5.8" y="2.9" width="1.2" height="1.5" fill="#33482c"/><rect x="41.5" y="6.3" width="1.7" height="1.0" fill="#2a3c24"/><rect x="19.2" y="2.1" width="2.0" height="1.8" fill="#33482c"/><rect x="108.3" y="3.4" width="2.7" height="0.9" fill="#2a3c24"/><rect x="102.2" y="4.5" width="1.2" height="1.7" fill="#33482c"/><rect x="77.1" y="10.0" width="2.2" height="1.5" fill="#2a3c24"/><rect x="22.0" y="6.0" width="1.1" height="1.9" fill="#2a3c24"/><rect x="17.5" y="4.9" width="1.5" height="1.7" fill="#2a3c24"/><rect x="100.5" y="1.9" width="2.3" height="1.2" fill="#4c6e3e"/><rect x="43.7" y="5.8" width="2.3" height="1.2" fill="#5a7c48"/><rect x="27.9" y="5.2" width="1.9" height="1.3" fill="#5a7c48"/><rect x="2.6" y="7.4" width="1.9" height="1.3" fill="#33482c"/><rect x="69.3" y="9.3" width="2.6" height="1.3" fill="#2a3c24"/><rect x="7.5" y="4.9" width="1.2" height="1.3" fill="#5a7c48"/><rect x="57.1" y="1.9" width="1.2" height="1.7" fill="#2a3c24"/><rect x="87.1" y="6.4" width="2.5" height="1.9" fill="#4c6e3e"/><rect x="73.1" y="9.0" width="2.7" height="2.0" fill="#4c6e3e"/><rect x="82.0" y="9.2" width="1.3" height="1.9" fill="#2a3c24"/><rect x="32.2" y="9.2" width="2.4" height="1.7" fill="#2a3c24"/><rect x="24.8" y="9.4" width="1.3" height="1.9" fill="#5a7c48"/><rect x="30.8" y="9.2" width="1.5" height="2.0" fill="#2a3c24"/><rect x="53.8" y="7.1" width="1.6" height="0.8" fill="#2a3c24"/><rect x="20.4" y="3.0" width="2.4" height="1.9" fill="#5a7c48"/><rect x="18.9" y="9.0" width="2.5" height="0.9" fill="#4c6e3e"/><rect x="96.1" y="10.7" width="2.1" height="1.5" fill="#33482c"/><rect x="98.8" y="2.5" width="2.5" height="1.2" fill="#33482c"/><rect x="42.1" y="5.0" width="1.7" height="1.7" fill="#2a3c24"/><rect x="49.5" y="3.2" width="1.6" height="1.4" fill="#4c6e3e"/><rect x="34.7" y="10.7" width="2.5" height="1.7" fill="#5a7c48"/><rect x="24.8" y="4.3" width="1.8" height="1.2" fill="#33482c"/><rect x="5.4" y="6.1" width="1.0" height="0.8" fill="#4c6e3e"/><rect x="39.8" y="2.5" width="2.1" height="1.3" fill="#5a7c48"/><rect x="33.7" y="2.8" width="2.2" height="1.4" fill="#5a7c48"/><rect x="15.1" y="10.4" width="2.4" height="1.3" fill="#2a3c24"/><rect x="7.1" y="2.9" width="1.8" height="1.1" fill="#5a7c48"/><rect x="0.3" y="63.7" width="2.8" height="1.5" fill="#54463a"/><rect x="17.4" y="61.9" width="2.5" height="1.1" fill="#54463a"/><rect x="27.1" y="37.9" width="1.1" height="1.0" fill="#54463a"/><rect x="4.8" y="75.2" width="1.0" height="1.5" fill="#4a3c30"/><rect x="28.2" y="42.1" width="2.0" height="1.6" fill="#4a3c30"/><rect x="19.4" y="53.9" width="1.3" height="1.2" fill="#54463a"/><rect x="9.0" y="38.1" width="2.6" height="1.7" fill="#54463a"/><rect x="0.2" y="72.3" width="2.8" height="0.9" fill="#54463a"/><rect x="19.7" y="43.5" width="1.5" height="1.6" fill="#4a3c30"/><rect x="3.7" y="74.3" width="2.9" height="1.1" fill="#54463a"/><rect x="1.6" y="63.3" width="1.9" height="1.7" fill="#54463a"/><rect x="15.7" y="47.4" width="2.9" height="1.9" fill="#54463a"/><rect x="2.6" y="57.8" width="1.5" height="1.1" fill="#4a3c30"/><rect x="22.4" y="50.1" width="1.7" height="1.1" fill="#2c241e"/><rect x="20.8" y="64.6" width="1.9" height="1.8" fill="#54463a"/><rect x="20.9" y="72.9" width="2.9" height="1.1" fill="#2c241e"/><rect x="11.7" y="61.2" width="2.8" height="1.0" fill="#54463a"/><rect x="0.8" y="40.6" width="1.7" height="1.0" fill="#4a3c30"/><rect x="0.9" y="37.8" width="2.3" height="0.9" fill="#54463a"/><rect x="2.0" y="38.0" width="2.5" height="1.0" fill="#54463a"/><rect x="19.9" y="73.8" width="2.9" height="0.9" fill="#54463a"/><rect x="6.2" y="40.8" width="2.9" height="1.9" fill="#4a3c30"/><rect x="22.6" y="39.8" width="2.3" height="1.4" fill="#54463a"/><rect x="4.0" y="70.1" width="1.4" height="1.2" fill="#54463a"/><rect x="12.7" y="36.9" width="2.9" height="0.9" fill="#2c241e"/><rect x="23.1" y="61.9" width="2.7" height="1.5" fill="#2c241e"/><rect x="0.9" y="53.8" width="2.0" height="0.9" fill="#2c241e"/><rect x="14.1" y="38.1" width="1.4" height="1.8" fill="#54463a"/><rect x="2.7" y="71.3" width="1.9" height="1.4" fill="#4a3c30"/><rect x="8.7" y="68.3" width="1.0" height="1.4" fill="#4a3c30"/><rect x="14.7" y="70.3" width="2.9" height="1.5" fill="#4a3c30"/><rect x="17.3" y="42.8" width="2.9" height="1.1" fill="#4a3c30"/><rect x="5.0" y="76.4" width="2.0" height="2.0" fill="#4a3c30"/><rect x="16.8" y="40.5" width="1.7" height="1.3" fill="#2c241e"/><rect x="11.8" y="74.3" width="1.8" height="1.6" fill="#4a3c30"/><rect x="11.2" y="49.0" width="2.8" height="1.4" fill="#2c241e"/><rect x="11.4" y="74.0" width="2.9" height="1.0" fill="#4a3c30"/><rect x="17.8" y="65.6" width="2.3" height="1.2" fill="#54463a"/><rect x="9.8" y="42.7" width="2.3" height="1.7" fill="#2c241e"/><rect x="5.1" y="54.9" width="2.2" height="1.0" fill="#2c241e"/><rect x="13.9" y="74.1" width="2.0" height="1.1" fill="#4a3c30"/><rect x="22.6" y="71.5" width="1.3" height="1.0" fill="#54463a"/><rect x="7.4" y="50.0" width="1.7" height="1.1" fill="#54463a"/><rect x="28.7" y="47.1" width="3.0" height="1.0" fill="#54463a"/><rect x="19.7" y="44.4" width="3.0" height="1.8" fill="#4a3c30"/><rect x="22.0" y="54.7" width="1.2" height="1.9" fill="#4a3c30"/><rect x="8.4" y="74.1" width="1.1" height="1.3" fill="#2c241e"/><rect x="23.7" y="65.8" width="3.0" height="1.2" fill="#54463a"/><rect x="0.7" y="47.1" width="1.8" height="1.7" fill="#54463a"/><rect x="27.2" y="54.5" width="2.2" height="1.6" fill="#54463a"/><rect x="19.6" y="73.7" width="2.4" height="1.8" fill="#54463a"/><rect x="20.4" y="63.6" width="1.9" height="1.1" fill="#2c241e"/><rect x="21.0" y="74.5" width="2.6" height="1.7" fill="#4a3c30"/><rect x="7.6" y="18.5" width="2.0" height="0.8" fill="#2a3c24"/><rect x="10.3" y="29.8" width="2.9" height="1.0" fill="#5a7c48"/><rect x="7.9" y="40.7" width="2.7" height="1.9" fill="#2a3c24"/><rect x="1.3" y="18.6" width="1.3" height="1.7" fill="#4c6e3e"/><rect x="11.3" y="29.8" width="2.7" height="1.3" fill="#4c6e3e"/><rect x="2.5" y="28.0" width="2.3" height="1.8" fill="#4c6e3e"/><rect x="6.3" y="25.2" width="1.4" height="1.6" fill="#2a3c24"/><rect x="4.7" y="40.0" width="2.5" height="1.5" fill="#4c6e3e"/><rect x="7.7" y="18.6" width="1.8" height="0.8" fill="#2a3c24"/><rect x="5.0" y="25.7" width="2.3" height="1.5" fill="#5a7c48"/><rect x="1.3" y="20.7" width="2.9" height="1.4" fill="#2a3c24"/><rect x="2.6" y="41.7" width="1.9" height="1.0" fill="#2a3c24"/><rect x="11.2" y="10.9" width="1.4" height="1.6" fill="#5a7c48"/><rect x="8.6" y="42.2" width="1.7" height="1.6" fill="#4c6e3e"/><rect x="9.8" y="42.3" width="3.0" height="1.7" fill="#2a3c24"/><rect x="7.8" y="40.8" width="1.7" height="1.8" fill="#2a3c24"/><rect x="3.2" y="23.8" width="3.0" height="1.6" fill="#2a3c24"/><rect x="5.8" y="41.8" width="1.7" height="1.6" fill="#2a3c24"/><rect x="3.8" y="28.4" width="2.3" height="1.6" fill="#5a7c48"/><rect x="4.3" y="47.0" width="1.1" height="1.8" fill="#2a3c24"/><rect x="10.9" y="40.9" width="2.1" height="1.2" fill="#4c6e3e"/><rect x="7.0" y="35.6" width="2.9" height="1.6" fill="#4c6e3e"/><rect x="3.0" y="12.3" width="2.7" height="1.0" fill="#4c6e3e"/><rect x="5.4" y="41.0" width="2.8" height="1.8" fill="#4c6e3e"/><rect x="2.0" y="45.4" width="3.0" height="0.9" fill="#5a7c48"/><rect x="10.8" y="31.0" width="2.7" height="1.0" fill="#5a7c48"/><rect x="8.3" y="30.3" width="2.7" height="1.6" fill="#5a7c48"/><rect x="1.4" y="13.0" width="1.5" height="1.0" fill="#2a3c24"/><rect x="5.9" y="10.5" width="2.8" height="1.6" fill="#2a3c24"/><rect x="3.0" y="14.9" width="2.7" height="0.8" fill="#5a7c48"/><rect x="10.1" y="27.7" width="2.0" height="1.2" fill="#5a7c48"/><rect x="5.6" y="25.9" width="1.2" height="1.6" fill="#5a7c48"/><rect x="7.6" y="9.2" width="1.1" height="1.7" fill="#5a7c48"/><rect x="12.0" y="42.0" width="2.0" height="1.4" fill="#4c6e3e"/><rect x="10.8" y="9.4" width="1.8" height="1.0" fill="#5a7c48"/><rect x="1.1" y="35.7" width="1.9" height="1.4" fill="#2a3c24"/><rect x="9.2" y="16.9" width="1.7" height="1.1" fill="#2a3c24"/><rect x="0.6" y="20.1" width="2.7" height="1.3" fill="#2a3c24"/><rect x="6.0" y="19.4" width="1.7" height="1.0" fill="#5a7c48"/><rect x="5.9" y="13.0" width="1.6" height="1.2" fill="#4c6e3e"/><rect x="7.0" y="34.7" width="1.8" height="1.5" fill="#4c6e3e"/><rect x="4.9" y="32.1" width="1.6" height="0.8" fill="#2a3c24"/><rect x="2.3" y="46.7" width="2.5" height="0.9" fill="#5a7c48"/><rect x="6.0" y="30.8" width="2.2" height="1.6" fill="#2a3c24"/><rect x="8.4" y="33.0" width="1.2" height="0.8" fill="#5a7c48"/><rect x="7.6" y="34.3" width="1.2" height="1.0" fill="#4c6e3e"/><rect x="0.4" y="40.5" width="1.0" height="1.8" fill="#5a7c48"/><rect x="1.7" y="21.0" width="1.5" height="1.2" fill="#5a7c48"/><rect x="5.1" y="21.4" width="2.1" height="1.5" fill="#2a3c24"/><rect x="11.0" y="28.9" width="1.1" height="0.9" fill="#5a7c48"/><rect x="9.7" y="32.2" width="1.9" height="0.8" fill="#2a3c24"/><rect x="4.6" y="32.9" width="3.0" height="1.4" fill="#5a7c48"/><rect x="4.9" y="12.3" width="1.9" height="1.9" fill="#5a7c48"/><rect x="7.5" y="25.9" width="2.4" height="0.9" fill="#4c6e3e"/><rect x="11.6" y="11.7" width="1.3" height="0.8" fill="#4c6e3e"/><rect x="8.6" y="18.2" width="2.5" height="1.9" fill="#5a7c48"/><rect x="4.4" y="39.4" width="2.7" height="1.7" fill="#5a7c48"/><rect x="1.0" y="34.4" width="2.0" height="1.6" fill="#5a7c48"/><rect x="10.7" y="46.4" width="2.4" height="0.8" fill="#4c6e3e"/><rect x="0.2" y="35.3" width="1.2" height="1.2" fill="#5a7c48"/><polygon points="0,34 34,32.7 21,79 0,79" fill="#3a2e25"/>
<polygon points="34.3,32.7 55,33.5 36,79 20.5,79" fill="#c4b8a2"/>
<polygon points="40,40 50,36 44,48 38,47" fill="#b09880"/>
<polygon points="55,33.5 76,32.7 57,79 36,79" fill="#4a3e32"/>
<polygon points="76,32.7 112,32.7 111,79 56,79" fill="#a6a094"/>
<polyline points="76,32.7 56.5,79" stroke="#ece4c8" stroke-width="2" fill="none"/>
<polyline points="76,33 98,33.5" stroke="#ddd6bf" stroke-width="1.2" fill="none"/>
<polyline points="65.7,24.3 34.3,79" stroke="#a4a8ae" stroke-width="1.6" fill="none"/>
<polyline points="70.5,26.7 43.4,79" stroke="#a0a4aa" stroke-width="1.6" fill="none"/>
<polyline points="74.1,31.5 48.8,79" stroke="#8a8e94" stroke-width="0.8" fill="none"/>
<polyline points="65.7,24.3 112,24.9" stroke="#a4a8ae" stroke-width="1.3" fill="none"/>
<polyline points="70.5,27 112,28" stroke="#9ca0a6" stroke-width="1.1" fill="none"/>
<polyline points="70.5,0 72.9,27.9" stroke="#2c5a3c" stroke-width="1.8" fill="none"/>
<polyline points="1.2,6.2 15,34" stroke="#263224" stroke-width="1.4" fill="none"/>
<polygon points="112,0 192,0 192,79 112,79" fill="#cfd0d3"/>
<polygon points="105.2,33.9 113.7,32.7 111.3,79 98.6,79" fill="#5a5e66"/>
<polygon points="113.7,0 119,0 117,79 111.3,79" fill="#e2e2e4"/>
<polygon points="124.5,3 127,3 126.5,20 128,35 127,53 125,53 124.6,35 125.5,20" fill="#55575e" opacity="0.75"/>
<polygon points="131,0 158,0 157,12 139,47.5 136,33 132,12" fill="#5aae5e"/>
<polygon points="158,0 166,0 172,8 169,22 158,36 148,46 135,62 125,79 116,79 130,60 141,44 152,26 157,12" fill="#b8b9bc"/>
<polygon points="166,0 192,0 192,61 171,79 126,79 138,65 150,51 160,39 169,25 172,8" fill="#dedfe1"/>
<path d="M166 4 C172 12 168 26 157 38 C146 50 134 64 124 79" stroke="#5c5952" stroke-width="3" fill="none"/>
<path d="M163 1 C168 6 168 10 166 16" stroke="#e8e8ea" stroke-width="1.5" fill="none"/>
<polygon points="171,79 192,61 192,79" fill="#a9adb5"/>
<rect x="0" y="0" width="192" height="1.6" fill="#333"/>
<rect x="0" y="77.3" width="192" height="1.7" fill="#333"/>
<rect x="2.5" y="5.8" width="73" height="1.6" fill="#f0f0f0" opacity="0.35"/>
<rect x="118" y="5.8" width="33" height="1.6" fill="#222" opacity="0.35"/>
<rect x="134" y="70.8" width="33" height="1.6" fill="#222" opacity="0.4"/>
</g>
</svg>
<div class="b" style="left:848.6px;top:291.2px;width:276px;height:25.9px;border:1px solid #eeeef1"></div>
<div class="t" style="left:859.0px;top:299.32px;font-size:9.25px;line-height:12.95px;color:#adb1bc;font-weight:normal;"><span style="letter-spacing:0.250px">搜索变量名</span></div>
<svg class="b" style="left:1105px;top:297.5px;" width="14" height="14" viewBox="0 0 14 14"><circle cx="6.6" cy="6.2" r="4.3" fill="none" stroke="#9ea3b2" stroke-width="1"/><path d="M9.8 9.4 L12.2 11.9" stroke="#9ea3b2" stroke-width="1.1"/></svg>
<div class="b" style="left:1131px;top:291.5px;width:66px;height:26.3px;background:#0866b4;border-radius:1.5px"></div>
<div class="t" style="left:1131.00px;width:66px;text-align:center;top:299.43px;font-size:9.25px;line-height:12.95px;color:#fff;font-weight:normal;"><span style="letter-spacing:0.250px">选择变量</span></div>
<div class="b" style="left:848.4px;top:325.8px;width:409.6px;height:1px;background:#efefef"></div>
<div class="t" style="left:859.3px;top:334.52px;font-size:10.4px;line-height:14.56px;color:#3d4252;font-weight:normal;"><span style="letter-spacing:0.400px">变量名</span></div>
<div class="t" style="left:1007.7px;top:334.52px;font-size:10.4px;line-height:14.56px;color:#3d4252;font-weight:normal;"><span style="letter-spacing:0.400px">类型</span></div>
<div class="t" style="left:1070.5px;top:334.52px;font-size:10.4px;line-height:14.56px;color:#3d4252;font-weight:normal;"><span style="letter-spacing:0.400px">变量值</span></div>
<div class="t" style="left:1140.6px;top:334.52px;font-size:10.4px;line-height:14.56px;color:#3d4252;font-weight:normal;"><span style="letter-spacing:0.400px">单位</span></div>
<div class="t" style="left:1206.9px;top:334.52px;font-size:10.4px;line-height:14.56px;color:#3d4252;font-weight:normal;"><span style="letter-spacing:0.400px">操作</span></div>
<div class="b" style="left:848.4px;top:356px;width:409.6px;height:2px;background:#ececef"></div>
<div class="t" style="left:859.5px;top:364.73px;font-size:9.25px;line-height:12.95px;color:#4a4f5e;font-weight:normal;"><span style="letter-spacing:0.250px">变量名测试内容测试内容</span></div>
<div class="t" style="left:1007.7px;top:364.73px;font-size:9.25px;line-height:12.95px;color:#4a4f5e;font-weight:normal;"><span style="letter-spacing:0.250px">测试</span></div>
<div class="t" style="left:1070.1px;top:364.73px;font-size:9.25px;line-height:12.95px;color:#4a4f5e;font-weight:normal;">2.55</div>
<div class="t" style="left:1141px;top:364.73px;font-size:9.25px;line-height:12.95px;color:#4a4f5e;font-weight:normal;">m</div>
<svg class="b" style="left:1196px;top:366.3px;" width="10" height="9" viewBox="0 0 10 9"><path d="M5.2 1 H2.2 Q1 1 1 2.2 V4.3 Q1 5.5 2.2 5.5 H3" fill="none" stroke="#36bdf0" stroke-width="1.1"/><path d="M4.5 3.5 H7.3 Q8.5 3.5 8.5 4.7 V6.8 Q8.5 8 7.3 8 H4.3 Q3.1 8 3.1 6.8 V5.6" fill="none" stroke="#36bdf0" stroke-width="1.1"/><path d="M5 5.8 L6.6 5.8" stroke="#36bdf0" stroke-width="1"/></svg>
<div class="t" style="left:1207.2px;top:364.73px;font-size:9.25px;line-height:12.95px;color:#2f86d6;font-weight:normal;"><span style="letter-spacing:0.250px">远程控制</span></div>
<div class="b" style="left:848.4px;top:384.7px;width:409.6px;height:28.2px;background:#f5f7fa"></div>
<div class="t" style="left:859.5px;top:392.93px;font-size:9.25px;line-height:12.95px;color:#4a4f5e;font-weight:normal;"><span style="letter-spacing:0.250px">变量名测试内容测试内容</span></div>
<div class="t" style="left:1007.7px;top:392.93px;font-size:9.25px;line-height:12.95px;color:#4a4f5e;font-weight:normal;"><span style="letter-spacing:0.250px">测试</span></div>
<div class="t" style="left:1070.1px;top:392.93px;font-size:9.25px;line-height:12.95px;color:#4a4f5e;font-weight:normal;">2.55</div>
<div class="t" style="left:1141px;top:392.93px;font-size:9.25px;line-height:12.95px;color:#4a4f5e;font-weight:normal;">m</div>
<svg class="b" style="left:1196px;top:394.5px;" width="10" height="9" viewBox="0 0 10 9"><path d="M5.2 1 H2.2 Q1 1 1 2.2 V4.3 Q1 5.5 2.2 5.5 H3" fill="none" stroke="#36bdf0" stroke-width="1.1"/><path d="M4.5 3.5 H7.3 Q8.5 3.5 8.5 4.7 V6.8 Q8.5 8 7.3 8 H4.3 Q3.1 8 3.1 6.8 V5.6" fill="none" stroke="#36bdf0" stroke-width="1.1"/><path d="M5 5.8 L6.6 5.8" stroke="#36bdf0" stroke-width="1"/></svg>
<div class="t" style="left:1207.2px;top:392.93px;font-size:9.25px;line-height:12.95px;color:#2f86d6;font-weight:normal;"><span style="letter-spacing:0.250px">远程控制</span></div>
<div class="t" style="left:859.5px;top:421.12px;font-size:9.25px;line-height:12.95px;color:#4a4f5e;font-weight:normal;"><span style="letter-spacing:0.250px">变量名测试内容测试内容</span></div>
<div class="t" style="left:1007.7px;top:421.12px;font-size:9.25px;line-height:12.95px;color:#4a4f5e;font-weight:normal;"><span style="letter-spacing:0.250px">测试</span></div>
<div class="t" style="left:1070.1px;top:421.12px;font-size:9.25px;line-height:12.95px;color:#4a4f5e;font-weight:normal;">2.55</div>
<div class="t" style="left:1141px;top:421.12px;font-size:9.25px;line-height:12.95px;color:#4a4f5e;font-weight:normal;">m</div>
<svg class="b" style="left:1196px;top:422.7px;" width="10" height="9" viewBox="0 0 10 9"><path d="M5.2 1 H2.2 Q1 1 1 2.2 V4.3 Q1 5.5 2.2 5.5 H3" fill="none" stroke="#36bdf0" stroke-width="1.1"/><path d="M4.5 3.5 H7.3 Q8.5 3.5 8.5 4.7 V6.8 Q8.5 8 7.3 8 H4.3 Q3.1 8 3.1 6.8 V5.6" fill="none" stroke="#36bdf0" stroke-width="1.1"/><path d="M5 5.8 L6.6 5.8" stroke="#36bdf0" stroke-width="1"/></svg>
<div class="t" style="left:1207.2px;top:421.12px;font-size:9.25px;line-height:12.95px;color:#2f86d6;font-weight:normal;"><span style="letter-spacing:0.250px">远程控制</span></div>
<div class="b" style="left:848.4px;top:441.1px;width:409.6px;height:28.2px;background:#f5f7fa"></div>
<div class="t" style="left:859.5px;top:449.33px;font-size:9.25px;line-height:12.95px;color:#4a4f5e;font-weight:normal;"><span style="letter-spacing:0.250px">变量名测试内容测试内容</span></div>
<div class="t" style="left:1007.7px;top:449.33px;font-size:9.25px;line-height:12.95px;color:#4a4f5e;font-weight:normal;"><span style="letter-spacing:0.250px">测试</span></div>
<div class="t" style="left:1070.1px;top:449.33px;font-size:9.25px;line-height:12.95px;color:#4a4f5e;font-weight:normal;">2.55</div>
<div class="t" style="left:1141px;top:449.33px;font-size:9.25px;line-height:12.95px;color:#4a4f5e;font-weight:normal;">m</div>
<svg class="b" style="left:1196px;top:450.9px;" width="10" height="9" viewBox="0 0 10 9"><path d="M5.2 1 H2.2 Q1 1 1 2.2 V4.3 Q1 5.5 2.2 5.5 H3" fill="none" stroke="#36bdf0" stroke-width="1.1"/><path d="M4.5 3.5 H7.3 Q8.5 3.5 8.5 4.7 V6.8 Q8.5 8 7.3 8 H4.3 Q3.1 8 3.1 6.8 V5.6" fill="none" stroke="#36bdf0" stroke-width="1.1"/><path d="M5 5.8 L6.6 5.8" stroke="#36bdf0" stroke-width="1"/></svg>
<div class="t" style="left:1207.2px;top:449.33px;font-size:9.25px;line-height:12.95px;color:#2f86d6;font-weight:normal;"><span style="letter-spacing:0.250px">远程控制</span></div>
<div class="t" style="left:859.5px;top:477.53px;font-size:9.25px;line-height:12.95px;color:#4a4f5e;font-weight:normal;"><span style="letter-spacing:0.250px">变量名测试内容测试内容</span></div>
<div class="t" style="left:1007.7px;top:477.53px;font-size:9.25px;line-height:12.95px;color:#4a4f5e;font-weight:normal;"><span style="letter-spacing:0.250px">测试</span></div>
<div class="t" style="left:1070.1px;top:477.53px;font-size:9.25px;line-height:12.95px;color:#4a4f5e;font-weight:normal;">2.55</div>
<div class="t" style="left:1141px;top:477.53px;font-size:9.25px;line-height:12.95px;color:#4a4f5e;font-weight:normal;">m</div>
<svg class="b" style="left:1196px;top:479.1px;" width="10" height="9" viewBox="0 0 10 9"><path d="M5.2 1 H2.2 Q1 1 1 2.2 V4.3 Q1 5.5 2.2 5.5 H3" fill="none" stroke="#36bdf0" stroke-width="1.1"/><path d="M4.5 3.5 H7.3 Q8.5 3.5 8.5 4.7 V6.8 Q8.5 8 7.3 8 H4.3 Q3.1 8 3.1 6.8 V5.6" fill="none" stroke="#36bdf0" stroke-width="1.1"/><path d="M5 5.8 L6.6 5.8" stroke="#36bdf0" stroke-width="1"/></svg>
<div class="t" style="left:1207.2px;top:477.53px;font-size:9.25px;line-height:12.95px;color:#2f86d6;font-weight:normal;"><span style="letter-spacing:0.250px">远程控制</span></div>
<div class="b" style="left:848.4px;top:497.5px;width:409.6px;height:28.2px;background:#f5f7fa"></div>
<div class="t" style="left:859.5px;top:505.73px;font-size:9.25px;line-height:12.95px;color:#4a4f5e;font-weight:normal;"><span style="letter-spacing:0.250px">变量名测试内容测试内容</span></div>
<div class="t" style="left:1007.7px;top:505.73px;font-size:9.25px;line-height:12.95px;color:#4a4f5e;font-weight:normal;"><span style="letter-spacing:0.250px">测试</span></div>
<div class="t" style="left:1070.1px;top:505.73px;font-size:9.25px;line-height:12.95px;color:#4a4f5e;font-weight:normal;">2.55</div>
<div class="t" style="left:1141px;top:505.73px;font-size:9.25px;line-height:12.95px;color:#4a4f5e;font-weight:normal;">m</div>
<svg class="b" style="left:1196px;top:507.3px;" width="10" height="9" viewBox="0 0 10 9"><path d="M5.2 1 H2.2 Q1 1 1 2.2 V4.3 Q1 5.5 2.2 5.5 H3" fill="none" stroke="#36bdf0" stroke-width="1.1"/><path d="M4.5 3.5 H7.3 Q8.5 3.5 8.5 4.7 V6.8 Q8.5 8 7.3 8 H4.3 Q3.1 8 3.1 6.8 V5.6" fill="none" stroke="#36bdf0" stroke-width="1.1"/><path d="M5 5.8 L6.6 5.8" stroke="#36bdf0" stroke-width="1"/></svg>
<div class="t" style="left:1207.2px;top:505.73px;font-size:9.25px;line-height:12.95px;color:#2f86d6;font-weight:normal;"><span style="letter-spacing:0.250px">远程控制</span></div>
<div class="t" style="left:859.5px;top:533.92px;font-size:9.25px;line-height:12.95px;color:#4a4f5e;font-weight:normal;"><span style="letter-spacing:0.250px">变量名测试内容测试内容</span></div>
<div class="t" style="left:1007.7px;top:533.92px;font-size:9.25px;line-height:12.95px;color:#4a4f5e;font-weight:normal;"><span style="letter-spacing:0.250px">测试</span></div>
<div class="t" style="left:1070.1px;top:533.92px;font-size:9.25px;line-height:12.95px;color:#4a4f5e;font-weight:normal;">2.55</div>
<div class="t" style="left:1141px;top:533.92px;font-size:9.25px;line-height:12.95px;color:#4a4f5e;font-weight:normal;">m</div>
<svg class="b" style="left:1196px;top:535.5px;" width="10" height="9" viewBox="0 0 10 9"><path d="M5.2 1 H2.2 Q1 1 1 2.2 V4.3 Q1 5.5 2.2 5.5 H3" fill="none" stroke="#36bdf0" stroke-width="1.1"/><path d="M4.5 3.5 H7.3 Q8.5 3.5 8.5 4.7 V6.8 Q8.5 8 7.3 8 H4.3 Q3.1 8 3.1 6.8 V5.6" fill="none" stroke="#36bdf0" stroke-width="1.1"/><path d="M5 5.8 L6.6 5.8" stroke="#36bdf0" stroke-width="1"/></svg>
<div class="t" style="left:1207.2px;top:533.92px;font-size:9.25px;line-height:12.95px;color:#2f86d6;font-weight:normal;"><span style="letter-spacing:0.250px">远程控制</span></div>
<div class="b" style="left:848.4px;top:553.9px;width:409.6px;height:28.2px;background:#f5f7fa"></div>
<div class="t" style="left:859.5px;top:562.12px;font-size:9.25px;line-height:12.95px;color:#4a4f5e;font-weight:normal;"><span style="letter-spacing:0.250px">变量名测试内容测试内容</span></div>
<div class="t" style="left:1007.7px;top:562.12px;font-size:9.25px;line-height:12.95px;color:#4a4f5e;font-weight:normal;"><span style="letter-spacing:0.250px">测试</span></div>
<div class="t" style="left:1070.1px;top:562.12px;font-size:9.25px;line-height:12.95px;color:#4a4f5e;font-weight:normal;">2.55</div>
<div class="t" style="left:1141px;top:562.12px;font-size:9.25px;line-height:12.95px;color:#4a4f5e;font-weight:normal;">m</div>
<svg class="b" style="left:1196px;top:563.7px;" width="10" height="9" viewBox="0 0 10 9"><path d="M5.2 1 H2.2 Q1 1 1 2.2 V4.3 Q1 5.5 2.2 5.5 H3" fill="none" stroke="#36bdf0" stroke-width="1.1"/><path d="M4.5 3.5 H7.3 Q8.5 3.5 8.5 4.7 V6.8 Q8.5 8 7.3 8 H4.3 Q3.1 8 3.1 6.8 V5.6" fill="none" stroke="#36bdf0" stroke-width="1.1"/><path d="M5 5.8 L6.6 5.8" stroke="#36bdf0" stroke-width="1"/></svg>
<div class="t" style="left:1207.2px;top:562.12px;font-size:9.25px;line-height:12.95px;color:#2f86d6;font-weight:normal;"><span style="letter-spacing:0.250px">远程控制</span></div>
<div class="t" style="left:859.5px;top:590.33px;font-size:9.25px;line-height:12.95px;color:#4a4f5e;font-weight:normal;"><span style="letter-spacing:0.250px">变量名测试内容测试内容</span></div>
<div class="t" style="left:1007.7px;top:590.33px;font-size:9.25px;line-height:12.95px;color:#4a4f5e;font-weight:normal;"><span style="letter-spacing:0.250px">测试</span></div>
<div class="t" style="left:1070.1px;top:590.33px;font-size:9.25px;line-height:12.95px;color:#4a4f5e;font-weight:normal;">2.55</div>
<div class="t" style="left:1141px;top:590.33px;font-size:9.25px;line-height:12.95px;color:#4a4f5e;font-weight:normal;">m</div>
<svg class="b" style="left:1196px;top:591.9px;" width="10" height="9" viewBox="0 0 10 9"><path d="M5.2 1 H2.2 Q1 1 1 2.2 V4.3 Q1 5.5 2.2 5.5 H3" fill="none" stroke="#36bdf0" stroke-width="1.1"/><path d="M4.5 3.5 H7.3 Q8.5 3.5 8.5 4.7 V6.8 Q8.5 8 7.3 8 H4.3 Q3.1 8 3.1 6.8 V5.6" fill="none" stroke="#36bdf0" stroke-width="1.1"/><path d="M5 5.8 L6.6 5.8" stroke="#36bdf0" stroke-width="1"/></svg>
<div class="t" style="left:1207.2px;top:590.33px;font-size:9.25px;line-height:12.95px;color:#2f86d6;font-weight:normal;"><span style="letter-spacing:0.250px">远程控制</span></div>
<div class="b" style="left:848.4px;top:610.3px;width:409.6px;height:28.2px;background:#f5f7fa"></div>
<div class="t" style="left:859.5px;top:618.52px;font-size:9.25px;line-height:12.95px;color:#4a4f5e;font-weight:normal;"><span style="letter-spacing:0.250px">变量名测试内容测试内容</span></div>
<div class="t" style="left:1007.7px;top:618.52px;font-size:9.25px;line-height:12.95px;color:#4a4f5e;font-weight:normal;"><span style="letter-spacing:0.250px">测试</span></div>
<div class="t" style="left:1070.1px;top:618.52px;font-size:9.25px;line-height:12.95px;color:#4a4f5e;font-weight:normal;">2.55</div>
<div class="t" style="left:1141px;top:618.52px;font-size:9.25px;line-height:12.95px;color:#4a4f5e;font-weight:normal;">m</div>
<svg class="b" style="left:1196px;top:620.1px;" width="10" height="9" viewBox="0 0 10 9"><path d="M5.2 1 H2.2 Q1 1 1 2.2 V4.3 Q1 5.5 2.2 5.5 H3" fill="none" stroke="#36bdf0" stroke-width="1.1"/><path d="M4.5 3.5 H7.3 Q8.5 3.5 8.5 4.7 V6.8 Q8.5 8 7.3 8 H4.3 Q3.1 8 3.1 6.8 V5.6" fill="none" stroke="#36bdf0" stroke-width="1.1"/><path d="M5 5.8 L6.6 5.8" stroke="#36bdf0" stroke-width="1"/></svg>
<div class="t" style="left:1207.2px;top:618.52px;font-size:9.25px;line-height:12.95px;color:#2f86d6;font-weight:normal;"><span style="letter-spacing:0.250px">远程控制</span></div>
<div class="t" style="left:859.5px;top:646.73px;font-size:9.25px;line-height:12.95px;color:#4a4f5e;font-weight:normal;"><span style="letter-spacing:0.250px">变量名测试内容测试内容</span></div>
<div class="t" style="left:1007.7px;top:646.73px;font-size:9.25px;line-height:12.95px;color:#4a4f5e;font-weight:normal;"><span style="letter-spacing:0.250px">测试</span></div>
<div class="t" style="left:1070.1px;top:646.73px;font-size:9.25px;line-height:12.95px;color:#4a4f5e;font-weight:normal;">2.55</div>
<div class="t" style="left:1141px;top:646.73px;font-size:9.25px;line-height:12.95px;color:#4a4f5e;font-weight:normal;">m</div>
<svg class="b" style="left:1196px;top:648.3px;" width="10" height="9" viewBox="0 0 10 9"><path d="M5.2 1 H2.2 Q1 1 1 2.2 V4.3 Q1 5.5 2.2 5.5 H3" fill="none" stroke="#36bdf0" stroke-width="1.1"/><path d="M4.5 3.5 H7.3 Q8.5 3.5 8.5 4.7 V6.8 Q8.5 8 7.3 8 H4.3 Q3.1 8 3.1 6.8 V5.6" fill="none" stroke="#36bdf0" stroke-width="1.1"/><path d="M5 5.8 L6.6 5.8" stroke="#36bdf0" stroke-width="1"/></svg>
<div class="t" style="left:1207.2px;top:646.73px;font-size:9.25px;line-height:12.95px;color:#2f86d6;font-weight:normal;"><span style="letter-spacing:0.250px">远程控制</span></div>
<div class="b" style="left:848.4px;top:666.2px;width:409.6px;height:1px;background:#efefef"></div>
<div class="b" style="left:987px;top:676px;width:19px;height:19px;border:1px solid #e8e8eb;border-radius:2px;background:#fff"></div>
<svg class="b" style="left:993px;top:682px;" width="6" height="8" viewBox="0 0 6 8"><path d="M4.5 0.8 L1.5 4 L4.5 7.2" fill="none" stroke="#c8cbd2" stroke-width="0.9"/></svg>
<div class="b" style="left:1009px;top:676px;width:18.8px;height:19px;background:#0b62b4;border-radius:2px"></div>
<div class="t" style="left:1009.40px;width:18px;text-align:center;top:679.55px;font-size:9.5px;line-height:13.3px;color:#fff;font-weight:bold;">1</div>
<div class="b" style="left:1031px;top:676px;width:18.6px;height:19px;border:1px solid #e8e8eb;border-radius:2px;background:#fff"></div>
<div class="t" style="left:1031.30px;width:18px;text-align:center;top:679.55px;font-size:9.5px;line-height:13.3px;color:#666a75;font-weight:normal;">2</div>
<div class="b" style="left:1052.8px;top:676px;width:18.4px;height:19px;border:1px solid #e8e8eb;border-radius:2px;background:#fff"></div>
<div class="t" style="left:1053.00px;width:18px;text-align:center;top:679.55px;font-size:9.5px;line-height:13.3px;color:#666a75;font-weight:normal;">3</div>
<div class="b" style="left:1074.5px;top:676px;width:18.4px;height:19px;border:1px solid #e8e8eb;border-radius:2px;background:#fff"></div>
<svg class="b" style="left:1080.7px;top:682px;" width="6" height="8" viewBox="0 0 6 8"><path d="M1.5 0.8 L4.5 4 L1.5 7.2" fill="none" stroke="#4a4f5e" stroke-width="0.9"/></svg>
<div class="b" style="left:1096.2px;top:676px;width:32.8px;height:19px;border:1px solid #e8e8eb;border-radius:2px;background:#fff"></div>
<div class="t" style="left:1102.5px;top:679.55px;font-size:9.5px;line-height:13.3px;color:#4a4f5e;font-weight:normal;">20</div>
<svg class="b" style="left:1117px;top:683px;" width="8" height="5" viewBox="0 0 8 5"><path d="M0.8 4.2 L4 1 L7.2 4.2" fill="none" stroke="#4a4f5e" stroke-width="0.9"/></svg>
<div class="t" style="left:1138.7px;top:679.73px;font-size:9.25px;line-height:12.95px;color:#7a7d86;font-weight:normal;"><span style="letter-spacing:0.250px">共</span>100<span style="letter-spacing:0.250px">条</span></div>
<div class="t" style="left:1180.9px;top:679.73px;font-size:9.25px;line-height:12.95px;color:#7a7d86;font-weight:normal;"><span style="letter-spacing:0.250px">到</span></div>
<div class="b" style="left:1195px;top:676px;width:25.5px;height:19px;border:1px solid #e8e8eb;border-radius:2px;background:#fff"></div>
<div class="t" style="left:1195.30px;width:25px;text-align:center;top:679.48px;font-size:9.6px;line-height:13.44px;color:#4a4f66;font-weight:normal;">6</div>
<div class="t" style="left:1224.7px;top:679.73px;font-size:9.25px;line-height:12.95px;color:#7a7d86;font-weight:normal;"><span style="letter-spacing:0.250px">页</span></div>
<div class="b" style="left:1239.6px;top:676px;width:17.9px;height:19px;border:1px solid #e8e8eb;border-radius:2px;background:#fff"></div>
<div class="t" style="left:1239.60px;width:18px;text-align:center;top:679.48px;font-size:9.6px;line-height:13.44px;color:#4a4f66;font-weight:normal;">G0</div>
</body></html>
